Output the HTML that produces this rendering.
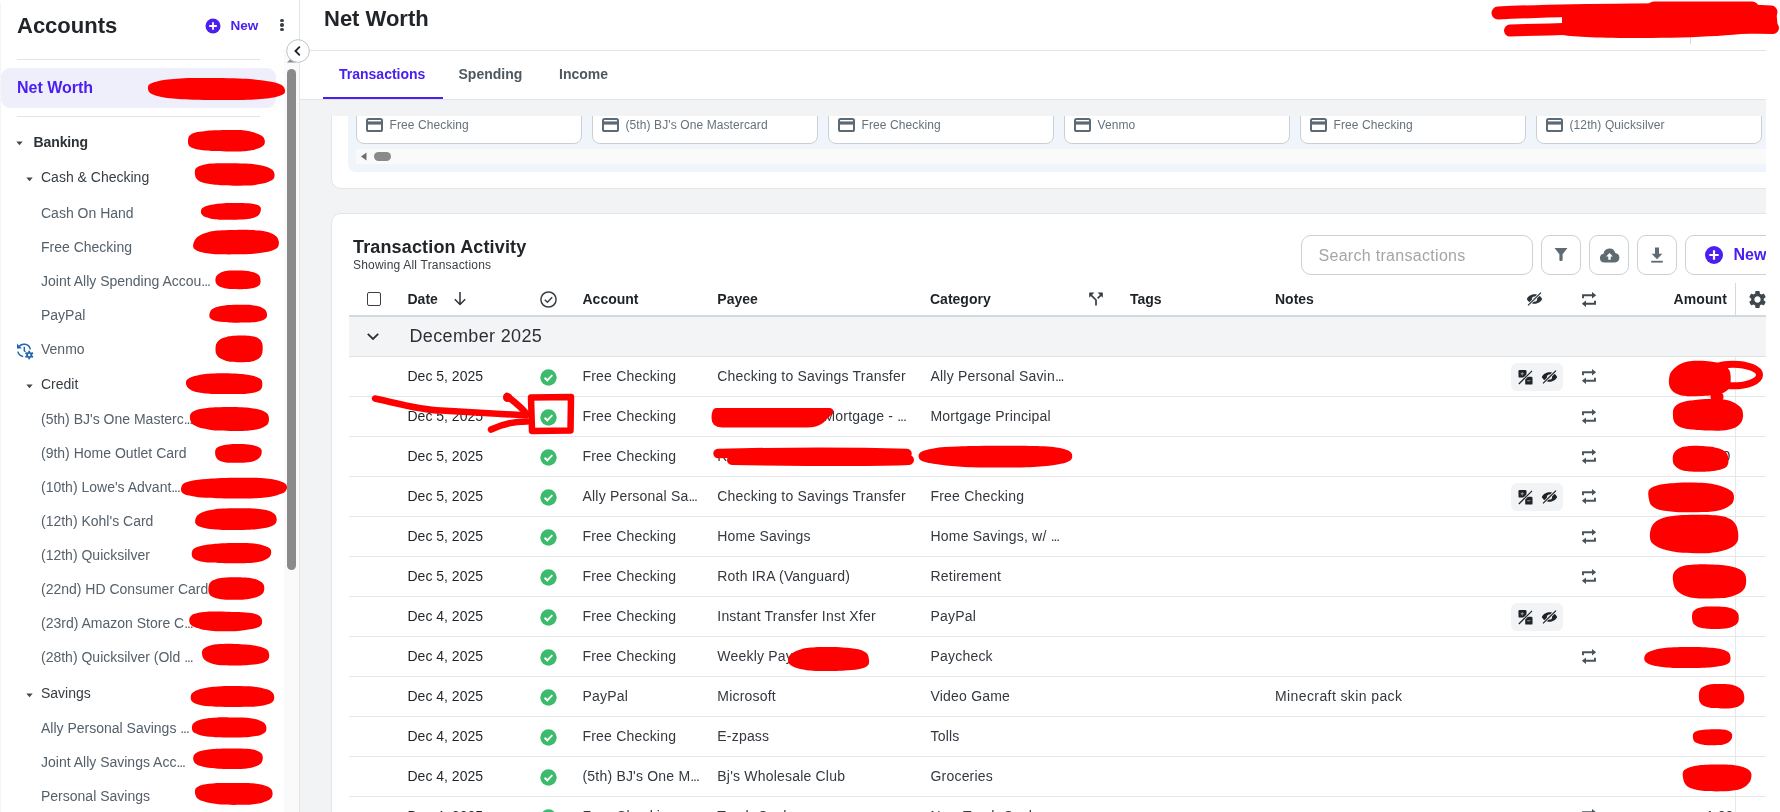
<!DOCTYPE html>
<html><head><meta charset="utf-8"><title>Net Worth</title>
<style>
html,body{margin:0;padding:0;width:1780px;height:812px;overflow:hidden;background:#fff}
body{position:relative;font-family:"Liberation Sans",sans-serif}
.t{position:absolute;white-space:nowrap;line-height:1}
.r{position:absolute}
.el{letter-spacing:-1.1px}
</style></head><body>
<div style="position:absolute;left:0;top:0;width:1780px;height:812px;background:#fff;will-change:transform;overflow:hidden">
<div class="r" style="left:0px;top:0px;width:299px;height:812px;background:#fff"></div>
<div class="r" style="left:0px;top:3px;width:1px;height:809px;background:#f4f5f6"></div>
<div class="t" style="left:17px;top:15px;font-size:22px;font-weight:700;color:#212529;">Accounts</div>
<svg class="r" style="left:205px;top:18px" width="16" height="16" viewBox="0 0 16 16"><circle cx="8" cy="8" r="7.5" fill="#4a1ff0"/><path d="M8 4.2v7.6M4.2 8h7.6" stroke="#fff" stroke-width="1.8"/></svg>
<div class="t" style="left:230.5px;top:19px;font-size:13.5px;font-weight:700;color:#4a1ff0;">New</div>
<div class="r" style="left:280.3px;top:18.7px;width:3.4px;height:3.4px;background:#3d4449;border-radius:50%"></div>
<div class="r" style="left:280.3px;top:23.2px;width:3.4px;height:3.4px;background:#3d4449;border-radius:50%"></div>
<div class="r" style="left:280.3px;top:27.7px;width:3.4px;height:3.4px;background:#3d4449;border-radius:50%"></div>
<div class="r" style="left:17px;top:59px;width:243px;height:1px;background:#e1e5e8"></div>
<div class="r" style="left:1px;top:68px;width:275px;height:40px;background:#efeffc;border-radius:9px"></div>
<div class="t" style="left:17px;top:80px;font-size:16px;font-weight:700;color:#4a1ff0;">Net Worth</div>
<div class="r" style="left:17px;top:116px;width:243px;height:1px;background:#e1e5e8"></div>
<svg class="r" style="left:16px;top:141px" width="7" height="5" viewBox="0 0 7 5"><path d="M0.3 0.6h6.4L3.5 4.3z" fill="#414a51"/></svg>
<div class="t" style="left:33.5px;top:135px;font-size:14px;font-weight:700;color:#2c3238;letter-spacing:-0.1px">Banking</div>
<svg class="r" style="left:26px;top:177px" width="7" height="5" viewBox="0 0 7 5"><path d="M0.3 0.6h6.4L3.5 4.3z" fill="#414a51"/></svg>
<div class="t" style="left:41px;top:170px;font-size:14px;font-weight:400;color:#363d43;">Cash &amp; Checking</div>
<div class="t" style="left:41px;top:206px;font-size:14px;font-weight:400;color:#55606a;">Cash On Hand</div>
<div class="t" style="left:41px;top:240px;font-size:14px;font-weight:400;color:#55606a;">Free Checking</div>
<div class="t" style="left:41px;top:274px;font-size:14px;font-weight:400;color:#55606a;">Joint Ally Spending Accou<span class="el">...</span></div>
<div class="t" style="left:41px;top:308px;font-size:14px;font-weight:400;color:#55606a;">PayPal</div>
<div class="t" style="left:41px;top:342px;font-size:14px;font-weight:400;color:#55606a;">Venmo</div>
<svg class="r" style="left:16px;top:342px" width="18" height="18" viewBox="0 0 18 18"><g fill="none" stroke="#2167b0" stroke-width="1.5"><path d="M2.6 5.2A6.4 6.4 0 0 1 14.3 7.4"/><path d="M1.9 9.6A6.4 6.4 0 0 0 7.2 14.4"/><path d="M8.3 4.8v3.9l1.1 1.1"/></g><path d="M1 1.6v4.9h4.9z" fill="#2167b0"/><g transform="translate(13.2 13)" fill="#2167b0"><circle r="3"/><rect x="-0.9" y="-4.3" width="1.8" height="2" transform="rotate(0)"/><rect x="-0.9" y="-4.3" width="1.8" height="2" transform="rotate(60)"/><rect x="-0.9" y="-4.3" width="1.8" height="2" transform="rotate(120)"/><rect x="-0.9" y="-4.3" width="1.8" height="2" transform="rotate(180)"/><rect x="-0.9" y="-4.3" width="1.8" height="2" transform="rotate(240)"/><rect x="-0.9" y="-4.3" width="1.8" height="2" transform="rotate(300)"/><circle r="1.2" fill="#fff"/></g></svg>
<svg class="r" style="left:26px;top:384px" width="7" height="5" viewBox="0 0 7 5"><path d="M0.3 0.6h6.4L3.5 4.3z" fill="#414a51"/></svg>
<div class="t" style="left:41px;top:377px;font-size:14px;font-weight:400;color:#363d43;">Credit</div>
<div class="t" style="left:41px;top:412px;font-size:14px;font-weight:400;color:#55606a;">(5th) BJ's One Masterc<span class="el">...</span></div>
<div class="t" style="left:41px;top:446px;font-size:14px;font-weight:400;color:#55606a;">(9th) Home Outlet Card</div>
<div class="t" style="left:41px;top:480px;font-size:14px;font-weight:400;color:#55606a;">(10th) Lowe's Advant<span class="el">...</span></div>
<div class="t" style="left:41px;top:514px;font-size:14px;font-weight:400;color:#55606a;">(12th) Kohl's Card</div>
<div class="t" style="left:41px;top:548px;font-size:14px;font-weight:400;color:#55606a;">(12th) Quicksilver</div>
<div class="t" style="left:41px;top:582px;font-size:14px;font-weight:400;color:#55606a;">(22nd) HD Consumer Card</div>
<div class="t" style="left:41px;top:616px;font-size:14px;font-weight:400;color:#55606a;">(23rd) Amazon Store C<span class="el">...</span></div>
<div class="t" style="left:41px;top:650px;font-size:14px;font-weight:400;color:#55606a;">(28th) Quicksilver (Old <span class="el">...</span></div>
<svg class="r" style="left:26px;top:693px" width="7" height="5" viewBox="0 0 7 5"><path d="M0.3 0.6h6.4L3.5 4.3z" fill="#414a51"/></svg>
<div class="t" style="left:41px;top:686px;font-size:14px;font-weight:400;color:#363d43;">Savings</div>
<div class="t" style="left:41px;top:721px;font-size:14px;font-weight:400;color:#55606a;">Ally Personal Savings <span class="el">...</span></div>
<div class="t" style="left:41px;top:755px;font-size:14px;font-weight:400;color:#55606a;">Joint Ally Savings Acc<span class="el">...</span></div>
<div class="t" style="left:41px;top:789px;font-size:14px;font-weight:400;color:#55606a;">Personal Savings</div>
<div class="r" style="left:284px;top:50px;width:15px;height:762px;background:#fafafa"></div>
<svg class="r" style="left:286px;top:57px" width="11" height="6" viewBox="0 0 11 6"><path d="M1 5.5h9L5.5 1z" fill="#8c8c8c"/></svg>
<div class="r" style="left:287px;top:69px;width:9px;height:501px;background:#8a8a8a;border-radius:4.5px"></div>
<div class="r" style="left:299px;top:0px;width:1px;height:812px;background:#e3e6e9"></div>
<div class="r" style="left:300px;top:0px;width:1466px;height:99px;background:#fff"></div>
<div class="r" style="left:300px;top:99px;width:1466px;height:713px;background:#f2f3f5"></div>
<div class="r" style="left:1766px;top:0px;width:14px;height:812px;background:#fff"></div>
<div class="t" style="left:324px;top:8px;font-size:22px;font-weight:700;color:#212529;">Net Worth</div>
<div class="r" style="left:300px;top:50px;width:1466px;height:1px;background:#e1e5e8"></div>
<div class="r" style="left:300px;top:99px;width:1466px;height:1px;background:#e1e5e8"></div>
<div class="t" style="left:339px;top:67px;font-size:14px;font-weight:700;color:#4a1ff0;">Transactions</div>
<div class="t" style="left:458.5px;top:67px;font-size:14px;font-weight:700;color:#4e5860;">Spending</div>
<div class="t" style="left:559px;top:67px;font-size:14px;font-weight:700;color:#4e5860;">Income</div>
<div class="r" style="left:323px;top:97px;width:120px;height:2px;background:#4a1ff0"></div>
<svg class="r" style="left:286px;top:39px" width="24" height="24" viewBox="0 0 24 24"><circle cx="12" cy="12" r="11.3" fill="#fff" stroke="#b9c5c9" stroke-width="1"/><path d="M13.8 7.6L9.4 12l4.4 4.4" fill="none" stroke="#1f2327" stroke-width="1.8"/></svg>
<div class="r" style="left:300px;top:116px;width:1466px;height:696px;overflow:hidden">
<div class="r" style="left:31px;top:-76px;width:1500px;height:148.5px;background:#fff;border:1px solid #e3e6e9;border-radius:10px;box-sizing:border-box"></div>
<div class="r" style="left:48px;top:-56px;width:1480px;height:112px;background:#f0f5fc;border-radius:8px"></div>
<div class="r" style="left:56px;top:-46px;width:225.5px;height:73.5px;background:#fff;border:1px solid #c8d0d5;border-radius:8px;box-sizing:border-box"></div>
<svg class="r" style="left:66px;top:2px" width="17" height="14" viewBox="0 0 17 14"><rect x="1" y="1" width="15" height="12" rx="1.6" fill="none" stroke="#5b6a74" stroke-width="2"/><rect x="1" y="3.4" width="15" height="3.2" fill="#5b6a74"/></svg>
<div class="t" style="left:89.5px;top:3px;font-size:12px;font-weight:400;color:#65727b;letter-spacing:0.1px">Free Checking</div>
<div class="r" style="left:292px;top:-46px;width:225.5px;height:73.5px;background:#fff;border:1px solid #c8d0d5;border-radius:8px;box-sizing:border-box"></div>
<svg class="r" style="left:302px;top:2px" width="17" height="14" viewBox="0 0 17 14"><rect x="1" y="1" width="15" height="12" rx="1.6" fill="none" stroke="#5b6a74" stroke-width="2"/><rect x="1" y="3.4" width="15" height="3.2" fill="#5b6a74"/></svg>
<div class="t" style="left:325.5px;top:3px;font-size:12px;font-weight:400;color:#65727b;letter-spacing:0.1px">(5th) BJ's One Mastercard</div>
<div class="r" style="left:528px;top:-46px;width:225.5px;height:73.5px;background:#fff;border:1px solid #c8d0d5;border-radius:8px;box-sizing:border-box"></div>
<svg class="r" style="left:538px;top:2px" width="17" height="14" viewBox="0 0 17 14"><rect x="1" y="1" width="15" height="12" rx="1.6" fill="none" stroke="#5b6a74" stroke-width="2"/><rect x="1" y="3.4" width="15" height="3.2" fill="#5b6a74"/></svg>
<div class="t" style="left:561.5px;top:3px;font-size:12px;font-weight:400;color:#65727b;letter-spacing:0.1px">Free Checking</div>
<div class="r" style="left:764px;top:-46px;width:225.5px;height:73.5px;background:#fff;border:1px solid #c8d0d5;border-radius:8px;box-sizing:border-box"></div>
<svg class="r" style="left:774px;top:2px" width="17" height="14" viewBox="0 0 17 14"><rect x="1" y="1" width="15" height="12" rx="1.6" fill="none" stroke="#5b6a74" stroke-width="2"/><rect x="1" y="3.4" width="15" height="3.2" fill="#5b6a74"/></svg>
<div class="t" style="left:797.5px;top:3px;font-size:12px;font-weight:400;color:#65727b;letter-spacing:0.1px">Venmo</div>
<div class="r" style="left:1000px;top:-46px;width:225.5px;height:73.5px;background:#fff;border:1px solid #c8d0d5;border-radius:8px;box-sizing:border-box"></div>
<svg class="r" style="left:1010px;top:2px" width="17" height="14" viewBox="0 0 17 14"><rect x="1" y="1" width="15" height="12" rx="1.6" fill="none" stroke="#5b6a74" stroke-width="2"/><rect x="1" y="3.4" width="15" height="3.2" fill="#5b6a74"/></svg>
<div class="t" style="left:1033.5px;top:3px;font-size:12px;font-weight:400;color:#65727b;letter-spacing:0.1px">Free Checking</div>
<div class="r" style="left:1236px;top:-46px;width:225.5px;height:73.5px;background:#fff;border:1px solid #c8d0d5;border-radius:8px;box-sizing:border-box"></div>
<svg class="r" style="left:1246px;top:2px" width="17" height="14" viewBox="0 0 17 14"><rect x="1" y="1" width="15" height="12" rx="1.6" fill="none" stroke="#5b6a74" stroke-width="2"/><rect x="1" y="3.4" width="15" height="3.2" fill="#5b6a74"/></svg>
<div class="t" style="left:1269.5px;top:3px;font-size:12px;font-weight:400;color:#65727b;letter-spacing:0.1px">(12th) Quicksilver</div>
<div class="r" style="left:56px;top:33px;width:1420px;height:15px;background:#fafafa"></div>
<svg class="r" style="left:60px;top:36px" width="7" height="9" viewBox="0 0 7 9"><path d="M6.5 0.5v8L1 4.5z" fill="#6e6e6e"/></svg>
<div class="r" style="left:74px;top:36px;width:17px;height:9px;background:#8a8a8a;border-radius:4.5px"></div>
<div class="r" style="left:31px;top:97px;width:1500px;height:700px;background:#fff;border:1px solid #e3e6e9;border-radius:10px;box-sizing:border-box"></div>
</div>
<div class="t" style="left:353px;top:238px;font-size:18px;font-weight:700;color:#212529;letter-spacing:0.15px">Transaction Activity</div>
<div class="t" style="left:353px;top:259px;font-size:12px;font-weight:400;color:#3a3f44;letter-spacing:0.2px">Showing All Transactions</div>
<div class="r" style="left:1301px;top:235px;width:231.5px;height:40px;background:#fff;border:1px solid #c9d2d7;border-radius:10px;box-sizing:border-box"></div>
<div class="t" style="left:1318.5px;top:248px;font-size:16px;font-weight:400;color:#a5a5a5;letter-spacing:0.3px">Search transactions</div>
<div class="r" style="left:1541px;top:235px;width:40px;height:40px;background:#fff;border:1px solid #c9d2d7;border-radius:9px;box-sizing:border-box"></div>
<div class="r" style="left:1589px;top:235px;width:40px;height:40px;background:#fff;border:1px solid #c9d2d7;border-radius:9px;box-sizing:border-box"></div>
<div class="r" style="left:1637px;top:235px;width:40px;height:40px;background:#fff;border:1px solid #c9d2d7;border-radius:9px;box-sizing:border-box"></div>
<div class="r" style="left:1685px;top:235px;width:120px;height:40px;background:#fff;border:1px solid #c9d2d7;border-radius:9px;box-sizing:border-box"></div>
<svg class="r" style="left:1554px;top:247px" width="14" height="15" viewBox="0 0 14 15"><path d="M0.5 1h13L8.6 7.2v5.8a1.1 1.1 0 0 1-1.1 1.1h-1a1.1 1.1 0 0 1-1.1-1.1V7.2z" fill="#5e6b73"/></svg>
<svg class="r" style="left:1598.5px;top:247.5px" width="21" height="15" viewBox="0 0 22 16"><path d="M5.5 15.5a4.8 4.8 0 0 1-0.9-9.5A6.5 6.5 0 0 1 17.2 5.2a5.2 5.2 0 0 1-0.4 10.3z" fill="#5e6b73"/><path d="M11 5.2l-3.6 3.8h2.3v3.6h2.6V9h2.3z" fill="#fff"/></svg>
<svg class="r" style="left:1650px;top:247px" width="14" height="16" viewBox="0 0 14 16"><path d="M5 0.5h4v6.2h3.4L7 12.2 1.6 6.7H5z" fill="#5e6b73"/><rect x="1.2" y="13.8" width="11.6" height="1.8" fill="#5e6b73"/></svg>
<svg class="r" style="left:1704px;top:245px" width="20" height="20" viewBox="0 0 20 20"><circle cx="10" cy="10" r="9" fill="#4a1ff0"/><path d="M10 5.3v9.4M5.3 10h9.4" stroke="#fff" stroke-width="2.2"/></svg>
<div class="t" style="left:1733.5px;top:247px;font-size:16px;font-weight:700;color:#4a1ff0;">New</div>
<div class="r" style="left:1766px;top:225px;width:14px;height:60px;background:#fff"></div>
<div class="r" style="left:366.5px;top:291.5px;width:14.5px;height:14.5px;border:1.6px solid #3b4046;border-radius:2px;box-sizing:border-box"></div>
<div class="t" style="left:407.5px;top:292px;font-size:14px;font-weight:700;color:#1e2327;">Date</div>
<svg class="r" style="left:453px;top:291px" width="14" height="15" viewBox="0 0 14 15"><path d="M7 1v12.5M1.8 8.3L7 13.5l5.2-5.2" fill="none" stroke="#2b3136" stroke-width="1.5"/></svg>
<svg class="r" style="left:539.5px;top:290.5px" width="17" height="17" viewBox="0.5 0.5 17 17"><circle cx="9" cy="9" r="7.6" fill="none" stroke="#3b4046" stroke-width="1.5"/><path d="M5.3 9.2l2.6 2.6 4.8-5" fill="none" stroke="#3b4046" stroke-width="1.5"/></svg>
<div class="t" style="left:582.5px;top:292px;font-size:14px;font-weight:700;color:#1e2327;">Account</div>
<div class="t" style="left:717.3px;top:292px;font-size:14px;font-weight:700;color:#1e2327;">Payee</div>
<div class="t" style="left:930px;top:292px;font-size:14px;font-weight:700;color:#1e2327;">Category</div>
<svg class="r" style="left:1088px;top:291px" width="16" height="16" viewBox="0 0 16 16"><g fill="none" stroke="#353c42" stroke-width="1.7"><path d="M8 14.5V9L2.8 3.8"/><path d="M9.6 7.4l3.6-3.6"/></g><path d="M1.2 1.6h5.2L1.2 6.8z M14.8 1.6H9.6l5.2 5.2z" fill="#353c42"/></svg>
<div class="t" style="left:1130px;top:292px;font-size:14px;font-weight:700;color:#1e2327;">Tags</div>
<div class="t" style="left:1275px;top:292px;font-size:14px;font-weight:700;color:#1e2327;">Notes</div>
<svg class="r" style="left:1525.5px;top:291.5px" width="17" height="14" viewBox="0 0 17 14"><path d="M8.5 2.2C4.6 2.2 1.8 4.8 0.8 7c1 2.2 3.8 4.8 7.7 4.8s6.7-2.6 7.7-4.8c-1-2.2-3.8-4.8-7.7-4.8z" fill="#2d3439"/><circle cx="8.5" cy="7" r="2.6" fill="#fff"/><circle cx="8.5" cy="7" r="1.3" fill="#2d3439"/><path d="M15 0.6L2 13.4" stroke="#fff" stroke-width="2.6"/><path d="M15 0.6L2 13.4" stroke="#2d3439" stroke-width="1.3"/></svg>
<svg class="r" style="left:1581px;top:291px" width="16" height="17" viewBox="0 0 16 17"><g fill="none" stroke="#414a51" stroke-width="1.9"><path d="M2 7.2V4.3h10"/><path d="M14 9.8v2.9H4"/></g><path d="M11 1l4.2 3.3L11 7.6z M5 9.4L0.8 12.7 5 16z" fill="#414a51"/></svg>
<div class="t" style="left:1673.5px;top:292px;font-size:14px;font-weight:700;color:#1e2327;letter-spacing:0.1px">Amount</div>
<div class="r" style="left:1735px;top:283px;width:1px;height:33px;background:#d3d9dd"></div>
<svg class="r" style="left:1746.5px;top:288.5px" width="21" height="21" viewBox="0 0 24 24"><path fill="#3f474d" d="M19.14 12.94c.04-.3.06-.61.06-.94 0-.32-.02-.64-.07-.94l2.03-1.58a.49.49 0 0 0 .12-.61l-1.92-3.32a.488.488 0 0 0-.59-.22l-2.39.96c-.5-.38-1.03-.7-1.62-.94l-.36-2.54a.484.484 0 0 0-.48-.41h-3.84c-.24 0-.43.17-.47.41l-.36 2.54c-.59.24-1.13.57-1.62.94l-2.39-.96c-.22-.08-.47 0-.59.22L2.74 8.87c-.12.21-.08.47.12.61l2.03 1.58c-.05.3-.09.63-.09.94s.02.64.07.94l-2.03 1.58a.49.49 0 0 0-.12.61l1.92 3.32c.12.22.37.29.59.22l2.39-.96c.5.38 1.03.7 1.62.94l.36 2.54c.05.24.24.41.48.41h3.84c.24 0 .44-.17.47-.41l.36-2.54c.59-.24 1.13-.56 1.62-.94l2.39.96c.22.08.47 0 .59-.22l1.92-3.32c.12-.22.07-.47-.12-.61l-2.01-1.58zM12 15.6c-1.98 0-3.6-1.62-3.6-3.6s1.62-3.6 3.6-3.6 3.6 1.62 3.6 3.6-1.62 3.6-3.6 3.6z"/></svg>
<div class="r" style="left:349px;top:315px;width:1417px;height:1.5px;background:#d3dade"></div>
<div class="r" style="left:349px;top:316.5px;width:1417px;height:40px;background:#f3f4f6"></div>
<div class="r" style="left:349px;top:356px;width:1417px;height:1px;background:#dfe3e6"></div>
<svg class="r" style="left:366px;top:331px" width="14" height="12" viewBox="0 0 14 12"><path d="M1.8 2.8L7 8l5.2-5.2" fill="none" stroke="#2b3136" stroke-width="1.8"/></svg>
<div class="t" style="left:409.5px;top:327px;font-size:18px;font-weight:400;color:#2b3036;letter-spacing:0.35px">December 2025</div>
<div class="t" style="left:407.5px;top:369px;font-size:14px;font-weight:400;color:#1f2429;">Dec 5, 2025</div>
<svg class="r" style="left:540px;top:368.5px" width="17" height="17" viewBox="0 0 17 17"><circle cx="8.5" cy="8.5" r="8.2" fill="#3dbb6c"/><path d="M4.6 8.7l2.7 2.6 5-5.1" fill="none" stroke="#fff" stroke-width="1.9"/></svg>
<div class="t" style="left:582.5px;top:369px;font-size:14px;font-weight:400;color:#33393f;letter-spacing:0.2px">Free Checking</div>
<div class="t" style="left:717.3px;top:369px;font-size:14px;font-weight:400;color:#33393f;letter-spacing:0.2px">Checking to Savings Transfer</div>
<div class="t" style="left:930.5px;top:369px;font-size:14px;font-weight:400;color:#33393f;letter-spacing:0.2px">Ally Personal Savin<span class="el">...</span></div>
<div class="r" style="left:1511px;top:363px;width:52px;height:28px;background:#f2f3f5;border-radius:6px"></div>
<svg class="r" style="left:1517.5px;top:369.5px" width="15" height="15" viewBox="0 0 15 15"><rect x="0.5" y="0" width="8" height="7.6" rx="1.2" fill="#1f2327"/><rect x="7.2" y="6.8" width="7.3" height="7.8" rx="1.2" fill="#1f2327"/><path d="M2.6 3.8h3.2M4.2 2.2v3.2M9.2 10.8h3.2" stroke="#9aa0a5" stroke-width="1.1"/><path d="M14 0.8L0.8 14" stroke="#f2f3f5" stroke-width="2.6"/><path d="M14 0.8L0.8 14" stroke="#1f2327" stroke-width="1.2"/></svg>
<svg class="r" style="left:1540.5px;top:370px" width="17" height="14" viewBox="0 0 17 14"><path d="M8.5 2.2C4.6 2.2 1.8 4.8 0.8 7c1 2.2 3.8 4.8 7.7 4.8s6.7-2.6 7.7-4.8c-1-2.2-3.8-4.8-7.7-4.8z" fill="#1f2327"/><circle cx="8.5" cy="7" r="2.6" fill="#f2f3f5"/><circle cx="8.5" cy="7" r="1.3" fill="#1f2327"/><path d="M15 0.6L2 13.4" stroke="#f2f3f5" stroke-width="2.6"/><path d="M15 0.6L2 13.4" stroke="#1f2327" stroke-width="1.3"/></svg>
<svg class="r" style="left:1581px;top:368px" width="16" height="17" viewBox="0 0 16 17"><g fill="none" stroke="#4a545c" stroke-width="1.9"><path d="M2 7.2V4.3h10"/><path d="M14 9.8v2.9H4"/></g><path d="M11 1l4.2 3.3L11 7.6z M5 9.4L0.8 12.7 5 16z" fill="#4a545c"/></svg>
<div class="r" style="left:349px;top:396px;width:1417px;height:1px;background:#e3e7ea"></div>
<div class="r" style="left:1735px;top:357px;width:1px;height:39px;background:#e6e9ec"></div>
<div class="t" style="left:407.5px;top:409px;font-size:14px;font-weight:400;color:#1f2429;">Dec 5, 2025</div>
<svg class="r" style="left:540px;top:408.5px" width="17" height="17" viewBox="0 0 17 17"><circle cx="8.5" cy="8.5" r="8.2" fill="#3dbb6c"/><path d="M4.6 8.7l2.7 2.6 5-5.1" fill="none" stroke="#fff" stroke-width="1.9"/></svg>
<div class="t" style="left:582.5px;top:409px;font-size:14px;font-weight:400;color:#33393f;letter-spacing:0.2px">Free Checking</div>
<div class="t" style="left:823.5px;top:409px;font-size:14px;font-weight:400;color:#33393f;letter-spacing:0.2px">Mortgage - <span class="el">...</span></div>
<div class="t" style="left:930.5px;top:409px;font-size:14px;font-weight:400;color:#33393f;letter-spacing:0.2px">Mortgage Principal</div>
<svg class="r" style="left:1581px;top:408px" width="16" height="17" viewBox="0 0 16 17"><g fill="none" stroke="#4a545c" stroke-width="1.9"><path d="M2 7.2V4.3h10"/><path d="M14 9.8v2.9H4"/></g><path d="M11 1l4.2 3.3L11 7.6z M5 9.4L0.8 12.7 5 16z" fill="#4a545c"/></svg>
<div class="r" style="left:349px;top:436px;width:1417px;height:1px;background:#e3e7ea"></div>
<div class="r" style="left:1735px;top:397px;width:1px;height:39px;background:#e6e9ec"></div>
<div class="t" style="left:407.5px;top:449px;font-size:14px;font-weight:400;color:#1f2429;">Dec 5, 2025</div>
<svg class="r" style="left:540px;top:448.5px" width="17" height="17" viewBox="0 0 17 17"><circle cx="8.5" cy="8.5" r="8.2" fill="#3dbb6c"/><path d="M4.6 8.7l2.7 2.6 5-5.1" fill="none" stroke="#fff" stroke-width="1.9"/></svg>
<div class="t" style="left:582.5px;top:449px;font-size:14px;font-weight:400;color:#33393f;letter-spacing:0.2px">Free Checking</div>
<div class="t" style="left:717.3px;top:449px;font-size:14px;font-weight:400;color:#33393f;letter-spacing:0.2px">R</div>
<div class="t" style="left:930.5px;top:449px;font-size:14px;font-weight:400;color:#33393f;letter-spacing:0.2px"></div>
<svg class="r" style="left:1581px;top:448px" width="16" height="17" viewBox="0 0 16 17"><g fill="none" stroke="#4a545c" stroke-width="1.9"><path d="M2 7.2V4.3h10"/><path d="M14 9.8v2.9H4"/></g><path d="M11 1l4.2 3.3L11 7.6z M5 9.4L0.8 12.7 5 16z" fill="#4a545c"/></svg>
<div class="r" style="left:349px;top:476px;width:1417px;height:1px;background:#e3e7ea"></div>
<div class="r" style="left:1735px;top:437px;width:1px;height:39px;background:#e6e9ec"></div>
<div class="t" style="left:407.5px;top:489px;font-size:14px;font-weight:400;color:#1f2429;">Dec 5, 2025</div>
<svg class="r" style="left:540px;top:488.5px" width="17" height="17" viewBox="0 0 17 17"><circle cx="8.5" cy="8.5" r="8.2" fill="#3dbb6c"/><path d="M4.6 8.7l2.7 2.6 5-5.1" fill="none" stroke="#fff" stroke-width="1.9"/></svg>
<div class="t" style="left:582.5px;top:489px;font-size:14px;font-weight:400;color:#33393f;letter-spacing:0.2px">Ally Personal Sa<span class="el">...</span></div>
<div class="t" style="left:717.3px;top:489px;font-size:14px;font-weight:400;color:#33393f;letter-spacing:0.2px">Checking to Savings Transfer</div>
<div class="t" style="left:930.5px;top:489px;font-size:14px;font-weight:400;color:#33393f;letter-spacing:0.2px">Free Checking</div>
<div class="r" style="left:1511px;top:483px;width:52px;height:28px;background:#f2f3f5;border-radius:6px"></div>
<svg class="r" style="left:1517.5px;top:489.5px" width="15" height="15" viewBox="0 0 15 15"><rect x="0.5" y="0" width="8" height="7.6" rx="1.2" fill="#1f2327"/><rect x="7.2" y="6.8" width="7.3" height="7.8" rx="1.2" fill="#1f2327"/><path d="M2.6 3.8h3.2M4.2 2.2v3.2M9.2 10.8h3.2" stroke="#9aa0a5" stroke-width="1.1"/><path d="M14 0.8L0.8 14" stroke="#f2f3f5" stroke-width="2.6"/><path d="M14 0.8L0.8 14" stroke="#1f2327" stroke-width="1.2"/></svg>
<svg class="r" style="left:1540.5px;top:490px" width="17" height="14" viewBox="0 0 17 14"><path d="M8.5 2.2C4.6 2.2 1.8 4.8 0.8 7c1 2.2 3.8 4.8 7.7 4.8s6.7-2.6 7.7-4.8c-1-2.2-3.8-4.8-7.7-4.8z" fill="#1f2327"/><circle cx="8.5" cy="7" r="2.6" fill="#f2f3f5"/><circle cx="8.5" cy="7" r="1.3" fill="#1f2327"/><path d="M15 0.6L2 13.4" stroke="#f2f3f5" stroke-width="2.6"/><path d="M15 0.6L2 13.4" stroke="#1f2327" stroke-width="1.3"/></svg>
<svg class="r" style="left:1581px;top:488px" width="16" height="17" viewBox="0 0 16 17"><g fill="none" stroke="#4a545c" stroke-width="1.9"><path d="M2 7.2V4.3h10"/><path d="M14 9.8v2.9H4"/></g><path d="M11 1l4.2 3.3L11 7.6z M5 9.4L0.8 12.7 5 16z" fill="#4a545c"/></svg>
<div class="r" style="left:349px;top:516px;width:1417px;height:1px;background:#e3e7ea"></div>
<div class="r" style="left:1735px;top:477px;width:1px;height:39px;background:#e6e9ec"></div>
<div class="t" style="left:407.5px;top:529px;font-size:14px;font-weight:400;color:#1f2429;">Dec 5, 2025</div>
<svg class="r" style="left:540px;top:528.5px" width="17" height="17" viewBox="0 0 17 17"><circle cx="8.5" cy="8.5" r="8.2" fill="#3dbb6c"/><path d="M4.6 8.7l2.7 2.6 5-5.1" fill="none" stroke="#fff" stroke-width="1.9"/></svg>
<div class="t" style="left:582.5px;top:529px;font-size:14px;font-weight:400;color:#33393f;letter-spacing:0.2px">Free Checking</div>
<div class="t" style="left:717.3px;top:529px;font-size:14px;font-weight:400;color:#33393f;letter-spacing:0.2px">Home Savings</div>
<div class="t" style="left:930.5px;top:529px;font-size:14px;font-weight:400;color:#33393f;letter-spacing:0.2px">Home Savings, w/ <span class="el">...</span></div>
<svg class="r" style="left:1581px;top:528px" width="16" height="17" viewBox="0 0 16 17"><g fill="none" stroke="#4a545c" stroke-width="1.9"><path d="M2 7.2V4.3h10"/><path d="M14 9.8v2.9H4"/></g><path d="M11 1l4.2 3.3L11 7.6z M5 9.4L0.8 12.7 5 16z" fill="#4a545c"/></svg>
<div class="r" style="left:349px;top:556px;width:1417px;height:1px;background:#e3e7ea"></div>
<div class="r" style="left:1735px;top:517px;width:1px;height:39px;background:#e6e9ec"></div>
<div class="t" style="left:407.5px;top:569px;font-size:14px;font-weight:400;color:#1f2429;">Dec 5, 2025</div>
<svg class="r" style="left:540px;top:568.5px" width="17" height="17" viewBox="0 0 17 17"><circle cx="8.5" cy="8.5" r="8.2" fill="#3dbb6c"/><path d="M4.6 8.7l2.7 2.6 5-5.1" fill="none" stroke="#fff" stroke-width="1.9"/></svg>
<div class="t" style="left:582.5px;top:569px;font-size:14px;font-weight:400;color:#33393f;letter-spacing:0.2px">Free Checking</div>
<div class="t" style="left:717.3px;top:569px;font-size:14px;font-weight:400;color:#33393f;letter-spacing:0.2px">Roth IRA (Vanguard)</div>
<div class="t" style="left:930.5px;top:569px;font-size:14px;font-weight:400;color:#33393f;letter-spacing:0.2px">Retirement</div>
<svg class="r" style="left:1581px;top:568px" width="16" height="17" viewBox="0 0 16 17"><g fill="none" stroke="#4a545c" stroke-width="1.9"><path d="M2 7.2V4.3h10"/><path d="M14 9.8v2.9H4"/></g><path d="M11 1l4.2 3.3L11 7.6z M5 9.4L0.8 12.7 5 16z" fill="#4a545c"/></svg>
<div class="r" style="left:349px;top:596px;width:1417px;height:1px;background:#e3e7ea"></div>
<div class="r" style="left:1735px;top:557px;width:1px;height:39px;background:#e6e9ec"></div>
<div class="t" style="left:407.5px;top:609px;font-size:14px;font-weight:400;color:#1f2429;">Dec 4, 2025</div>
<svg class="r" style="left:540px;top:608.5px" width="17" height="17" viewBox="0 0 17 17"><circle cx="8.5" cy="8.5" r="8.2" fill="#3dbb6c"/><path d="M4.6 8.7l2.7 2.6 5-5.1" fill="none" stroke="#fff" stroke-width="1.9"/></svg>
<div class="t" style="left:582.5px;top:609px;font-size:14px;font-weight:400;color:#33393f;letter-spacing:0.2px">Free Checking</div>
<div class="t" style="left:717.3px;top:609px;font-size:14px;font-weight:400;color:#33393f;letter-spacing:0.2px">Instant Transfer Inst Xfer</div>
<div class="t" style="left:930.5px;top:609px;font-size:14px;font-weight:400;color:#33393f;letter-spacing:0.2px">PayPal</div>
<div class="r" style="left:1511px;top:603px;width:52px;height:28px;background:#f2f3f5;border-radius:6px"></div>
<svg class="r" style="left:1517.5px;top:609.5px" width="15" height="15" viewBox="0 0 15 15"><rect x="0.5" y="0" width="8" height="7.6" rx="1.2" fill="#1f2327"/><rect x="7.2" y="6.8" width="7.3" height="7.8" rx="1.2" fill="#1f2327"/><path d="M2.6 3.8h3.2M4.2 2.2v3.2M9.2 10.8h3.2" stroke="#9aa0a5" stroke-width="1.1"/><path d="M14 0.8L0.8 14" stroke="#f2f3f5" stroke-width="2.6"/><path d="M14 0.8L0.8 14" stroke="#1f2327" stroke-width="1.2"/></svg>
<svg class="r" style="left:1540.5px;top:610px" width="17" height="14" viewBox="0 0 17 14"><path d="M8.5 2.2C4.6 2.2 1.8 4.8 0.8 7c1 2.2 3.8 4.8 7.7 4.8s6.7-2.6 7.7-4.8c-1-2.2-3.8-4.8-7.7-4.8z" fill="#1f2327"/><circle cx="8.5" cy="7" r="2.6" fill="#f2f3f5"/><circle cx="8.5" cy="7" r="1.3" fill="#1f2327"/><path d="M15 0.6L2 13.4" stroke="#f2f3f5" stroke-width="2.6"/><path d="M15 0.6L2 13.4" stroke="#1f2327" stroke-width="1.3"/></svg>
<div class="r" style="left:349px;top:636px;width:1417px;height:1px;background:#e3e7ea"></div>
<div class="r" style="left:1735px;top:597px;width:1px;height:39px;background:#e6e9ec"></div>
<div class="t" style="left:407.5px;top:649px;font-size:14px;font-weight:400;color:#1f2429;">Dec 4, 2025</div>
<svg class="r" style="left:540px;top:648.5px" width="17" height="17" viewBox="0 0 17 17"><circle cx="8.5" cy="8.5" r="8.2" fill="#3dbb6c"/><path d="M4.6 8.7l2.7 2.6 5-5.1" fill="none" stroke="#fff" stroke-width="1.9"/></svg>
<div class="t" style="left:582.5px;top:649px;font-size:14px;font-weight:400;color:#33393f;letter-spacing:0.2px">Free Checking</div>
<div class="t" style="left:717.3px;top:649px;font-size:14px;font-weight:400;color:#33393f;letter-spacing:0.2px">Weekly Pay</div>
<div class="t" style="left:930.5px;top:649px;font-size:14px;font-weight:400;color:#33393f;letter-spacing:0.2px">Paycheck</div>
<svg class="r" style="left:1581px;top:648px" width="16" height="17" viewBox="0 0 16 17"><g fill="none" stroke="#4a545c" stroke-width="1.9"><path d="M2 7.2V4.3h10"/><path d="M14 9.8v2.9H4"/></g><path d="M11 1l4.2 3.3L11 7.6z M5 9.4L0.8 12.7 5 16z" fill="#4a545c"/></svg>
<div class="r" style="left:349px;top:676px;width:1417px;height:1px;background:#e3e7ea"></div>
<div class="r" style="left:1735px;top:637px;width:1px;height:39px;background:#e6e9ec"></div>
<div class="t" style="left:407.5px;top:689px;font-size:14px;font-weight:400;color:#1f2429;">Dec 4, 2025</div>
<svg class="r" style="left:540px;top:688.5px" width="17" height="17" viewBox="0 0 17 17"><circle cx="8.5" cy="8.5" r="8.2" fill="#3dbb6c"/><path d="M4.6 8.7l2.7 2.6 5-5.1" fill="none" stroke="#fff" stroke-width="1.9"/></svg>
<div class="t" style="left:582.5px;top:689px;font-size:14px;font-weight:400;color:#33393f;letter-spacing:0.2px">PayPal</div>
<div class="t" style="left:717.3px;top:689px;font-size:14px;font-weight:400;color:#33393f;letter-spacing:0.2px">Microsoft</div>
<div class="t" style="left:930.5px;top:689px;font-size:14px;font-weight:400;color:#33393f;letter-spacing:0.2px">Video Game</div>
<div class="t" style="left:1275px;top:689px;font-size:14px;font-weight:400;color:#33393f;letter-spacing:0.4px">Minecraft skin pack</div>
<div class="r" style="left:349px;top:716px;width:1417px;height:1px;background:#e3e7ea"></div>
<div class="r" style="left:1735px;top:677px;width:1px;height:39px;background:#e6e9ec"></div>
<div class="t" style="left:407.5px;top:729px;font-size:14px;font-weight:400;color:#1f2429;">Dec 4, 2025</div>
<svg class="r" style="left:540px;top:728.5px" width="17" height="17" viewBox="0 0 17 17"><circle cx="8.5" cy="8.5" r="8.2" fill="#3dbb6c"/><path d="M4.6 8.7l2.7 2.6 5-5.1" fill="none" stroke="#fff" stroke-width="1.9"/></svg>
<div class="t" style="left:582.5px;top:729px;font-size:14px;font-weight:400;color:#33393f;letter-spacing:0.2px">Free Checking</div>
<div class="t" style="left:717.3px;top:729px;font-size:14px;font-weight:400;color:#33393f;letter-spacing:0.2px">E-zpass</div>
<div class="t" style="left:930.5px;top:729px;font-size:14px;font-weight:400;color:#33393f;letter-spacing:0.2px">Tolls</div>
<div class="r" style="left:349px;top:756px;width:1417px;height:1px;background:#e3e7ea"></div>
<div class="r" style="left:1735px;top:717px;width:1px;height:39px;background:#e6e9ec"></div>
<div class="t" style="left:407.5px;top:769px;font-size:14px;font-weight:400;color:#1f2429;">Dec 4, 2025</div>
<svg class="r" style="left:540px;top:768.5px" width="17" height="17" viewBox="0 0 17 17"><circle cx="8.5" cy="8.5" r="8.2" fill="#3dbb6c"/><path d="M4.6 8.7l2.7 2.6 5-5.1" fill="none" stroke="#fff" stroke-width="1.9"/></svg>
<div class="t" style="left:582.5px;top:769px;font-size:14px;font-weight:400;color:#33393f;letter-spacing:0.2px">(5th) BJ's One M<span class="el">...</span></div>
<div class="t" style="left:717.3px;top:769px;font-size:14px;font-weight:400;color:#33393f;letter-spacing:0.2px">Bj's Wholesale Club</div>
<div class="t" style="left:930.5px;top:769px;font-size:14px;font-weight:400;color:#33393f;letter-spacing:0.2px">Groceries</div>
<div class="r" style="left:349px;top:796px;width:1417px;height:1px;background:#e3e7ea"></div>
<div class="r" style="left:1735px;top:757px;width:1px;height:39px;background:#e6e9ec"></div>
<div class="t" style="left:407.5px;top:809px;font-size:14px;font-weight:400;color:#1f2429;">Dec 4, 2025</div>
<svg class="r" style="left:540px;top:808.5px" width="17" height="17" viewBox="0 0 17 17"><circle cx="8.5" cy="8.5" r="8.2" fill="#3dbb6c"/><path d="M4.6 8.7l2.7 2.6 5-5.1" fill="none" stroke="#fff" stroke-width="1.9"/></svg>
<div class="t" style="left:582.5px;top:809px;font-size:14px;font-weight:400;color:#33393f;letter-spacing:0.2px">Free Checking</div>
<div class="t" style="left:717.3px;top:809px;font-size:14px;font-weight:400;color:#33393f;letter-spacing:0.2px">Trash Cash</div>
<div class="t" style="left:930.5px;top:809px;font-size:14px;font-weight:400;color:#33393f;letter-spacing:0.2px">New Trash Cash</div>
<svg class="r" style="left:1581px;top:808px" width="16" height="17" viewBox="0 0 16 17"><g fill="none" stroke="#4a545c" stroke-width="1.9"><path d="M2 7.2V4.3h10"/><path d="M14 9.8v2.9H4"/></g><path d="M11 1l4.2 3.3L11 7.6z M5 9.4L0.8 12.7 5 16z" fill="#4a545c"/></svg>
<div class="r" style="left:349px;top:836px;width:1417px;height:1px;background:#e3e7ea"></div>
<div class="r" style="left:1735px;top:797px;width:1px;height:39px;background:#e6e9ec"></div>
<div class="t" style="left:1722.5px;top:449px;font-size:14px;font-weight:400;color:#2b3036;">0</div>
<div class="t" style="left:1706px;top:809px;font-size:14px;font-weight:400;color:#2b3036;">1.00</div>
<div class="r" style="left:1690px;top:37px;width:1px;height:7px;background:#d5dadd"></div>
<svg class="r" style="left:0;top:0" width="1780" height="812" viewBox="0 0 1780 812">
<path d="M284.8 89.2 C285.2 90.3 285.2 91.7 284.7 92.7 C284.2 93.7 283.3 94.4 281.8 95.1 C280.3 95.8 278.3 96.5 275.7 97.0 C273.2 97.6 270.1 98.1 266.5 98.5 C262.9 98.9 258.9 99.2 254.3 99.4 C249.8 99.7 245.5 99.8 239.1 99.9 C232.8 100.0 223.7 100.1 216.0 100.1 C208.3 100.0 199.4 99.9 193.2 99.8 C187.0 99.6 183.0 99.4 178.8 99.1 C174.5 98.9 170.9 98.5 167.7 98.1 C164.4 97.7 161.7 97.2 159.4 96.6 C157.0 96.1 155.1 95.5 153.5 94.8 C151.9 94.2 150.6 93.6 149.7 92.6 C148.8 91.7 148.2 90.3 148.0 89.2 C147.8 88.0 147.9 86.6 148.4 85.6 C149.0 84.6 150.0 84.0 151.4 83.3 C152.8 82.6 154.6 81.9 157.0 81.4 C159.3 80.8 162.1 80.3 165.4 79.8 C168.8 79.4 172.5 79.0 177.0 78.7 C181.5 78.4 185.8 78.2 192.3 78.1 C198.8 78.0 208.2 78.0 216.0 78.0 C223.8 78.1 232.8 78.3 238.9 78.5 C245.0 78.7 248.6 79.0 252.7 79.3 C256.7 79.6 260.0 80.0 263.2 80.4 C266.3 80.8 269.0 81.3 271.5 81.8 C274.0 82.3 276.2 82.9 278.0 83.5 C279.8 84.2 281.4 84.7 282.5 85.7 C283.7 86.6 284.5 88.0 284.8 89.2Z" fill="#ff0000"/>
<path d="M264.8 140.8 C265.0 142.1 264.8 143.5 264.2 144.5 C263.7 145.5 262.8 146.1 261.8 146.8 C260.7 147.5 259.4 148.0 258.0 148.6 C256.5 149.1 255.0 149.6 253.1 150.0 C251.2 150.4 249.2 150.8 246.7 151.0 C244.3 151.3 242.0 151.4 238.5 151.5 C235.0 151.6 230.1 151.5 226.0 151.5 C221.9 151.4 217.3 151.3 214.0 151.1 C210.7 151.0 208.6 150.8 206.2 150.6 C203.8 150.4 201.5 150.1 199.5 149.8 C197.4 149.5 195.4 149.1 193.9 148.6 C192.3 148.1 191.1 147.5 190.2 146.8 C189.2 146.1 188.7 145.4 188.4 144.4 C188.0 143.5 187.9 142.0 188.0 140.9 C188.0 139.7 188.2 138.3 188.5 137.3 C188.9 136.3 189.4 135.6 190.3 134.9 C191.2 134.2 192.4 133.6 193.8 133.1 C195.3 132.6 197.1 132.1 199.1 131.8 C201.1 131.4 203.3 131.2 205.7 130.9 C208.2 130.7 210.3 130.5 213.7 130.3 C217.0 130.2 221.8 130.1 226.0 130.0 C230.2 130.0 235.2 130.0 238.6 130.1 C242.0 130.2 244.2 130.5 246.5 130.8 C248.8 131.1 250.6 131.5 252.3 132.0 C254.0 132.4 255.4 132.9 256.7 133.4 C258.1 134.0 259.3 134.5 260.4 135.1 C261.5 135.8 262.6 136.3 263.4 137.3 C264.1 138.2 264.7 139.6 264.8 140.8Z" fill="#ff0000"/>
<path d="M274.5 174.3 C274.7 175.6 274.4 177.2 273.9 178.2 C273.3 179.3 272.3 179.9 271.1 180.6 C269.9 181.3 268.4 181.9 266.8 182.4 C265.2 183.0 263.4 183.4 261.5 183.8 C259.5 184.2 257.4 184.6 255.0 184.9 C252.5 185.2 250.3 185.4 246.7 185.5 C243.2 185.7 238.1 185.7 233.9 185.7 C229.6 185.6 224.6 185.5 221.2 185.3 C217.7 185.2 215.6 184.9 213.2 184.6 C210.8 184.3 208.8 184.0 206.9 183.6 C205.0 183.2 203.3 182.7 201.9 182.2 C200.4 181.7 199.2 181.1 198.3 180.4 C197.3 179.7 196.6 179.0 196.0 178.0 C195.5 177.0 195.2 175.6 195.0 174.4 C194.8 173.1 194.8 171.6 195.0 170.6 C195.2 169.5 195.5 168.8 196.3 168.0 C197.0 167.2 198.0 166.5 199.5 165.9 C200.9 165.3 202.8 164.8 204.9 164.4 C207.0 164.0 209.5 163.8 212.2 163.6 C214.9 163.4 217.4 163.3 221.1 163.3 C224.7 163.2 229.7 163.2 233.8 163.3 C238.0 163.4 242.8 163.5 246.2 163.6 C249.6 163.8 251.7 164.0 254.0 164.3 C256.4 164.5 258.4 164.9 260.3 165.3 C262.2 165.6 263.9 166.1 265.5 166.6 C267.1 167.1 268.5 167.6 269.8 168.3 C271.0 169.0 272.2 169.5 273.0 170.6 C273.7 171.6 274.4 173.1 274.5 174.3Z" fill="#ff0000"/>
<path d="M260.6 211.3 C260.3 212.2 260.0 213.3 259.5 214.0 C259.1 214.7 258.5 215.1 257.9 215.7 C257.2 216.2 256.4 216.6 255.5 217.0 C254.5 217.5 253.4 217.8 252.0 218.2 C250.7 218.5 249.2 218.8 247.4 219.0 C245.6 219.3 244.0 219.5 241.3 219.6 C238.6 219.7 234.7 219.8 231.4 219.8 C228.1 219.9 224.1 219.8 221.4 219.7 C218.7 219.6 216.9 219.4 215.0 219.2 C213.2 219.0 211.6 218.7 210.1 218.4 C208.7 218.1 207.4 217.7 206.3 217.3 C205.1 216.9 204.2 216.4 203.4 215.9 C202.6 215.4 201.9 214.9 201.5 214.1 C201.1 213.4 200.9 212.3 200.9 211.4 C201.0 210.4 201.3 209.3 201.8 208.6 C202.4 207.8 203.2 207.4 204.1 206.9 C205.0 206.4 206.1 206.0 207.3 205.7 C208.5 205.3 209.8 205.0 211.3 204.7 C212.7 204.4 214.2 204.2 216.0 203.9 C217.8 203.7 219.3 203.5 221.9 203.4 C224.5 203.3 228.2 203.1 231.4 203.1 C234.6 203.0 238.6 203.0 241.4 203.0 C244.2 203.1 246.1 203.2 248.2 203.3 C250.2 203.5 252.1 203.7 253.7 204.0 C255.3 204.3 256.7 204.7 257.7 205.1 C258.8 205.6 259.6 206.1 260.1 206.7 C260.6 207.3 260.8 207.8 260.9 208.6 C261.0 209.4 260.8 210.5 260.6 211.3Z" fill="#ff0000"/>
<path d="M278.9 242.3 C278.9 243.7 278.8 245.3 278.2 246.4 C277.7 247.5 276.7 248.2 275.5 249.0 C274.3 249.7 272.6 250.3 270.9 250.9 C269.1 251.4 267.1 251.8 264.9 252.2 C262.7 252.6 260.5 252.9 257.9 253.2 C255.3 253.5 253.1 253.7 249.5 253.9 C245.8 254.1 240.6 254.3 236.1 254.3 C231.6 254.4 226.1 254.4 222.2 254.3 C218.4 254.3 215.8 254.1 212.9 253.9 C210.0 253.7 207.4 253.4 205.1 252.9 C202.8 252.5 200.6 252.0 198.9 251.4 C197.2 250.8 195.7 250.1 194.8 249.3 C193.8 248.5 193.3 247.6 193.1 246.5 C193.0 245.3 193.3 243.6 193.8 242.3 C194.3 241.0 195.1 239.4 196.0 238.4 C196.8 237.3 197.8 236.7 198.9 236.0 C200.0 235.3 201.1 234.6 202.5 234.0 C203.9 233.4 205.4 232.9 207.3 232.4 C209.1 231.9 211.2 231.4 213.7 231.1 C216.1 230.7 218.5 230.4 222.2 230.2 C226.0 230.0 231.4 229.9 236.1 229.9 C240.8 229.8 246.4 229.8 250.3 230.0 C254.2 230.1 256.8 230.3 259.5 230.6 C262.2 230.9 264.5 231.3 266.6 231.8 C268.6 232.3 270.3 232.9 271.7 233.5 C273.2 234.2 274.4 234.9 275.4 235.7 C276.4 236.4 277.2 237.1 277.7 238.2 C278.3 239.4 278.8 240.9 278.9 242.3Z" fill="#ff0000"/>
<path d="M260.5 279.9 C260.6 280.9 260.6 282.1 260.4 283.0 C260.3 283.8 260.0 284.4 259.5 285.0 C259.0 285.6 258.3 286.2 257.4 286.6 C256.6 287.1 255.5 287.5 254.3 287.8 C253.1 288.1 251.7 288.3 250.3 288.5 C248.8 288.7 247.5 288.9 245.4 289.0 C243.4 289.1 240.5 289.2 238.1 289.2 C235.6 289.2 232.6 289.2 230.6 289.1 C228.5 288.9 227.2 288.8 225.8 288.5 C224.4 288.3 223.3 288.0 222.2 287.6 C221.1 287.2 220.2 286.8 219.4 286.4 C218.6 285.9 217.9 285.4 217.3 284.9 C216.8 284.3 216.3 283.8 215.9 282.9 C215.6 282.1 215.4 280.9 215.4 279.9 C215.4 278.9 215.6 277.7 215.9 276.9 C216.2 276.0 216.7 275.5 217.3 274.9 C217.8 274.3 218.5 273.8 219.2 273.4 C220.0 272.9 220.8 272.4 221.9 272.0 C222.9 271.7 224.1 271.3 225.5 271.1 C226.9 270.8 228.3 270.6 230.4 270.5 C232.5 270.4 235.5 270.4 238.0 270.5 C240.6 270.5 243.5 270.7 245.5 270.8 C247.5 271.0 248.7 271.2 250.1 271.4 C251.4 271.7 252.6 271.9 253.7 272.3 C254.8 272.6 255.8 273.0 256.6 273.5 C257.4 273.9 258.1 274.4 258.7 275.0 C259.2 275.5 259.6 276.1 259.9 276.9 C260.2 277.7 260.4 278.9 260.5 279.9Z" fill="#ff0000"/>
<path d="M267.0 313.9 C267.1 314.9 267.0 316.1 266.7 317.0 C266.4 317.8 265.8 318.3 265.1 318.9 C264.3 319.5 263.3 320.0 262.2 320.4 C261.1 320.8 259.8 321.2 258.3 321.5 C256.9 321.8 255.3 322.1 253.4 322.3 C251.6 322.4 249.9 322.6 247.4 322.6 C244.9 322.7 241.3 322.7 238.3 322.7 C235.3 322.7 231.8 322.6 229.4 322.5 C226.9 322.4 225.3 322.3 223.4 322.1 C221.6 322.0 219.8 321.8 218.2 321.5 C216.7 321.3 215.2 320.9 214.0 320.5 C212.8 320.1 211.7 319.6 211.0 319.0 C210.2 318.4 209.8 317.8 209.5 317.0 C209.3 316.1 209.3 314.9 209.5 313.9 C209.6 312.9 210.0 311.7 210.5 310.9 C211.0 310.1 211.6 309.6 212.4 309.1 C213.2 308.5 214.1 308.0 215.2 307.6 C216.3 307.2 217.5 306.8 218.9 306.5 C220.2 306.2 221.7 305.9 223.4 305.7 C225.1 305.4 226.6 305.2 229.1 305.1 C231.6 304.9 235.2 304.8 238.3 304.8 C241.4 304.7 245.2 304.7 247.7 304.8 C250.3 304.9 252.0 305.1 253.8 305.4 C255.5 305.6 257.0 305.9 258.3 306.3 C259.6 306.7 260.6 307.1 261.6 307.6 C262.6 308.0 263.4 308.5 264.2 309.1 C264.9 309.6 265.6 310.1 266.0 310.9 C266.5 311.7 266.9 312.9 267.0 313.9Z" fill="#ff0000"/>
<path d="M262.7 348.9 C262.6 350.2 262.5 351.8 262.3 353.0 C262.0 354.1 261.7 354.9 261.2 355.7 C260.7 356.5 260.1 357.3 259.4 357.9 C258.6 358.6 257.7 359.3 256.6 359.8 C255.5 360.4 254.3 360.9 252.8 361.2 C251.3 361.6 249.9 361.9 247.7 362.1 C245.5 362.2 242.2 362.3 239.5 362.3 C236.8 362.2 233.6 362.1 231.5 361.8 C229.3 361.6 228.0 361.3 226.5 360.9 C225.1 360.6 223.8 360.1 222.7 359.6 C221.5 359.1 220.5 358.6 219.6 358.0 C218.7 357.3 217.9 356.7 217.3 355.8 C216.7 355.0 216.2 354.3 215.9 353.1 C215.6 352.0 215.5 350.3 215.5 348.9 C215.5 347.4 215.7 345.8 216.0 344.6 C216.3 343.4 216.8 342.7 217.4 341.9 C218.1 341.1 218.8 340.4 219.7 339.8 C220.6 339.2 221.6 338.6 222.8 338.1 C223.9 337.7 225.2 337.3 226.7 336.9 C228.1 336.6 229.5 336.3 231.6 336.1 C233.7 335.9 236.8 335.7 239.5 335.6 C242.2 335.6 245.4 335.6 247.7 335.7 C249.9 335.8 251.4 336.0 253.0 336.3 C254.6 336.6 255.9 337.1 257.1 337.6 C258.2 338.2 259.1 338.8 259.9 339.5 C260.7 340.2 261.2 341.0 261.6 341.9 C262.1 342.7 262.3 343.5 262.5 344.7 C262.7 345.8 262.7 347.5 262.7 348.9Z" fill="#ff0000"/>
<path d="M262.3 383.9 C262.4 385.0 262.2 386.3 262.0 387.2 C261.7 388.1 261.4 388.7 260.8 389.4 C260.2 390.1 259.4 390.7 258.1 391.3 C256.9 391.9 255.3 392.4 253.3 392.8 C251.4 393.2 249.0 393.5 246.4 393.7 C243.8 393.9 241.3 394.0 237.7 394.1 C234.1 394.1 229.0 394.1 224.7 394.1 C220.4 394.1 215.4 394.0 211.9 393.9 C208.4 393.8 206.2 393.6 203.8 393.3 C201.4 393.1 199.3 392.7 197.5 392.3 C195.7 391.9 194.3 391.5 193.0 390.9 C191.7 390.4 190.7 389.9 189.8 389.2 C188.8 388.6 188.0 388.1 187.4 387.2 C186.8 386.3 186.2 385.0 186.0 383.9 C185.9 382.8 185.9 381.5 186.4 380.5 C186.8 379.6 187.6 379.0 188.6 378.4 C189.6 377.8 191.0 377.2 192.4 376.7 C193.8 376.2 195.4 375.8 197.3 375.4 C199.1 375.0 201.0 374.6 203.4 374.3 C205.7 374.0 207.9 373.7 211.5 373.5 C215.0 373.4 220.3 373.3 224.7 373.3 C229.1 373.4 234.3 373.5 237.7 373.7 C241.2 373.9 243.3 374.2 245.6 374.5 C247.9 374.8 249.8 375.2 251.6 375.6 C253.4 376.0 255.0 376.4 256.4 376.9 C257.8 377.4 259.0 377.9 259.9 378.5 C260.8 379.2 261.4 379.7 261.8 380.6 C262.2 381.5 262.3 382.8 262.3 383.9Z" fill="#ff0000"/>
<path d="M269.0 418.9 C269.0 420.2 268.8 421.8 268.3 422.9 C267.9 424.0 267.2 424.7 266.2 425.5 C265.3 426.3 264.1 426.9 262.7 427.5 C261.3 428.2 259.6 428.7 257.7 429.2 C255.8 429.6 253.6 430.0 251.1 430.3 C248.6 430.6 246.3 430.8 242.7 430.9 C239.2 431.0 234.0 431.1 229.8 431.0 C225.6 430.9 220.6 430.8 217.2 430.6 C213.9 430.4 211.8 430.1 209.5 429.8 C207.2 429.4 205.3 429.0 203.4 428.6 C201.6 428.2 199.9 427.7 198.4 427.2 C196.9 426.6 195.6 426.0 194.4 425.3 C193.2 424.6 192.2 424.0 191.5 422.9 C190.8 421.8 190.2 420.3 190.0 418.9 C189.8 417.5 189.9 415.9 190.2 414.8 C190.6 413.7 191.3 412.9 192.3 412.1 C193.4 411.3 194.7 410.7 196.3 410.1 C197.9 409.5 199.8 409.0 201.9 408.7 C204.0 408.3 206.4 408.0 208.9 407.7 C211.5 407.5 213.8 407.4 217.3 407.3 C220.8 407.2 225.6 407.1 229.8 407.1 C234.0 407.2 238.8 407.2 242.2 407.3 C245.6 407.5 247.9 407.7 250.3 407.9 C252.8 408.2 255.0 408.5 257.0 408.9 C258.9 409.3 260.7 409.8 262.2 410.4 C263.7 411.0 264.9 411.6 265.9 412.4 C266.9 413.1 267.7 413.8 268.2 414.9 C268.7 416.0 269.0 417.6 269.0 418.9Z" fill="#ff0000"/>
<path d="M261.6 453.4 C261.4 454.5 260.9 455.7 260.4 456.6 C260.0 457.4 259.3 457.9 258.6 458.5 C258.0 459.0 257.2 459.5 256.4 460.0 C255.5 460.4 254.6 460.8 253.5 461.2 C252.4 461.5 251.3 461.8 249.9 462.0 C248.5 462.2 247.2 462.4 245.3 462.5 C243.3 462.7 240.5 462.8 238.1 462.8 C235.6 462.8 232.7 462.9 230.6 462.8 C228.6 462.7 227.1 462.6 225.6 462.4 C224.1 462.2 222.8 462.0 221.7 461.6 C220.5 461.3 219.6 460.8 218.8 460.3 C218.0 459.8 217.4 459.2 216.9 458.6 C216.4 458.0 216.1 457.4 215.8 456.6 C215.5 455.7 215.2 454.5 215.1 453.4 C215.1 452.3 215.1 451.1 215.3 450.2 C215.6 449.3 216.0 448.7 216.6 448.1 C217.3 447.5 218.1 447.0 219.1 446.6 C220.0 446.2 221.2 445.8 222.4 445.5 C223.5 445.2 224.8 445.0 226.2 444.8 C227.6 444.6 228.9 444.4 230.8 444.3 C232.8 444.1 235.6 444.1 238.0 444.1 C240.5 444.1 243.3 444.1 245.3 444.2 C247.3 444.3 248.5 444.5 250.0 444.7 C251.4 444.9 252.7 445.1 254.0 445.4 C255.2 445.7 256.4 446.0 257.4 446.5 C258.4 446.9 259.4 447.4 260.1 448.0 C260.8 448.6 261.3 449.2 261.6 450.1 C261.8 451.0 261.8 452.3 261.6 453.4Z" fill="#ff0000"/>
<path d="M287.0 488.1 C286.8 489.3 286.2 490.6 285.3 491.5 C284.5 492.4 283.2 493.0 281.8 493.6 C280.4 494.2 278.9 494.7 277.1 495.3 C275.3 495.8 273.4 496.3 271.0 496.7 C268.6 497.1 266.0 497.5 262.8 497.8 C259.6 498.1 256.4 498.3 251.7 498.4 C246.9 498.5 240.0 498.5 234.2 498.5 C228.4 498.4 221.8 498.3 217.1 498.2 C212.4 498.0 209.4 497.9 206.0 497.7 C202.6 497.4 199.4 497.2 196.6 496.9 C193.8 496.5 191.1 496.1 189.0 495.6 C186.9 495.1 185.2 494.6 183.9 493.9 C182.6 493.2 181.9 492.6 181.4 491.6 C181.0 490.7 180.9 489.3 181.1 488.2 C181.2 487.0 181.6 485.7 182.4 484.7 C183.1 483.8 184.1 483.2 185.5 482.6 C187.0 482.0 188.8 481.4 190.9 481.0 C193.0 480.5 195.5 480.1 198.2 479.8 C200.9 479.5 203.8 479.2 207.0 479.0 C210.2 478.7 212.9 478.5 217.4 478.3 C221.9 478.1 228.4 477.9 234.2 477.8 C240.0 477.7 247.1 477.7 252.0 477.7 C256.9 477.8 260.3 478.0 263.7 478.2 C267.2 478.5 270.0 478.8 272.6 479.3 C275.1 479.7 277.1 480.2 278.9 480.7 C280.8 481.3 282.3 481.9 283.5 482.5 C284.7 483.2 285.7 483.8 286.3 484.7 C286.9 485.7 287.2 487.0 287.0 488.1Z" fill="#ff0000"/>
<path d="M276.7 519.2 C276.7 520.4 276.5 521.8 276.0 522.7 C275.5 523.7 274.8 524.3 273.8 525.0 C272.7 525.6 271.4 526.2 269.9 526.7 C268.4 527.2 266.7 527.7 264.7 528.1 C262.7 528.5 260.6 528.8 258.1 529.1 C255.6 529.4 253.3 529.6 249.6 529.8 C246.0 529.9 240.7 530.0 236.2 530.0 C231.6 530.1 226.3 530.0 222.5 529.9 C218.8 529.8 216.3 529.6 213.7 529.3 C211.0 529.1 208.6 528.8 206.5 528.4 C204.3 528.0 202.4 527.6 200.8 527.1 C199.2 526.5 197.9 525.9 197.0 525.2 C196.0 524.5 195.5 523.8 195.2 522.8 C195.0 521.8 195.1 520.4 195.4 519.3 C195.7 518.1 196.3 516.8 197.0 515.8 C197.7 514.9 198.6 514.3 199.6 513.7 C200.6 513.0 201.7 512.5 203.1 511.9 C204.5 511.4 206.0 510.9 207.9 510.5 C209.7 510.1 211.8 509.7 214.2 509.4 C216.7 509.1 218.9 508.8 222.6 508.6 C226.2 508.5 231.6 508.3 236.1 508.3 C240.7 508.2 246.3 508.2 250.1 508.3 C254.0 508.5 256.5 508.6 259.2 508.9 C261.8 509.2 264.0 509.6 266.0 510.0 C267.9 510.5 269.4 511.0 270.8 511.6 C272.1 512.2 273.1 512.8 273.9 513.5 C274.8 514.2 275.4 514.8 275.9 515.8 C276.3 516.7 276.6 518.1 276.7 519.2Z" fill="#ff0000"/>
<path d="M271.1 553.2 C271.0 554.4 270.4 555.7 269.8 556.6 C269.1 557.5 268.2 558.0 267.2 558.7 C266.2 559.3 265.1 559.8 263.7 560.4 C262.4 560.9 261.0 561.4 259.2 561.8 C257.3 562.2 255.3 562.5 252.8 562.8 C250.4 563.0 248.0 563.2 244.5 563.2 C241.0 563.3 235.9 563.3 231.8 563.3 C227.6 563.2 222.8 563.1 219.3 563.0 C215.9 562.9 213.6 562.8 211.1 562.6 C208.5 562.4 206.1 562.2 204.0 561.9 C201.8 561.6 199.8 561.2 198.2 560.7 C196.6 560.2 195.3 559.6 194.3 559.0 C193.3 558.3 192.7 557.7 192.2 556.7 C191.8 555.8 191.7 554.4 191.7 553.3 C191.8 552.1 192.1 550.7 192.7 549.8 C193.3 548.9 194.2 548.3 195.4 547.7 C196.5 547.1 198.1 546.6 199.8 546.2 C201.5 545.7 203.5 545.4 205.5 545.1 C207.5 544.8 209.6 544.5 211.9 544.3 C214.3 544.0 216.2 543.8 219.5 543.6 C222.8 543.4 227.5 543.2 231.7 543.1 C236.0 543.0 241.2 542.9 244.8 543.0 C248.5 543.1 250.9 543.2 253.4 543.5 C256.0 543.7 258.1 544.1 260.0 544.5 C261.9 544.9 263.5 545.4 264.9 545.9 C266.4 546.4 267.6 547.0 268.6 547.6 C269.5 548.3 270.3 548.9 270.8 549.8 C271.2 550.8 271.3 552.1 271.1 553.2Z" fill="#ff0000"/>
<path d="M264.3 588.5 C264.3 589.8 264.0 591.4 263.4 592.4 C262.9 593.5 262.1 594.1 261.2 594.7 C260.3 595.4 259.2 596.0 258.0 596.5 C256.9 597.0 255.6 597.4 254.3 597.8 C252.9 598.1 251.5 598.5 249.9 598.7 C248.2 599.0 246.8 599.3 244.4 599.4 C242.1 599.6 238.7 599.7 235.8 599.7 C232.8 599.8 229.4 599.8 226.9 599.7 C224.4 599.6 222.8 599.4 221.0 599.2 C219.2 599.0 217.6 598.7 216.1 598.3 C214.7 597.9 213.4 597.4 212.4 596.8 C211.3 596.3 210.5 595.6 209.9 594.9 C209.3 594.1 208.9 593.4 208.6 592.3 C208.4 591.3 208.4 589.8 208.4 588.5 C208.5 587.2 208.7 585.8 209.0 584.7 C209.3 583.7 209.8 583.0 210.4 582.3 C211.1 581.5 211.9 580.9 212.9 580.3 C213.9 579.8 215.1 579.3 216.5 578.9 C217.9 578.5 219.5 578.2 221.2 578.0 C223.0 577.7 224.6 577.6 227.0 577.5 C229.4 577.3 232.8 577.3 235.7 577.3 C238.7 577.3 242.1 577.4 244.5 577.5 C246.9 577.6 248.4 577.8 250.2 578.0 C251.9 578.3 253.4 578.6 254.8 579.0 C256.2 579.4 257.4 579.8 258.6 580.4 C259.7 580.9 260.7 581.5 261.6 582.2 C262.4 582.9 263.2 583.5 263.6 584.6 C264.1 585.6 264.3 587.2 264.3 588.5Z" fill="#ff0000"/>
<path d="M262.1 621.1 C262.1 622.2 262.1 623.5 261.7 624.3 C261.3 625.2 260.6 625.8 259.7 626.4 C258.8 627.0 257.5 627.5 256.1 627.9 C254.6 628.4 253.0 628.8 251.2 629.1 C249.5 629.5 247.6 629.8 245.4 630.1 C243.2 630.4 241.3 630.7 238.0 630.9 C234.6 631.1 229.7 631.2 225.6 631.2 C221.4 631.2 216.4 631.1 213.1 630.9 C209.8 630.8 207.8 630.4 205.7 630.1 C203.6 629.8 202.0 629.4 200.5 628.9 C198.9 628.5 197.6 628.1 196.3 627.7 C195.0 627.2 193.8 626.7 192.8 626.2 C191.8 625.6 190.9 625.1 190.3 624.2 C189.7 623.4 189.4 622.2 189.3 621.2 C189.1 620.1 189.3 618.9 189.6 618.0 C189.9 617.1 190.3 616.5 191.0 615.9 C191.7 615.2 192.6 614.6 193.8 614.1 C195.0 613.6 196.5 613.1 198.4 612.7 C200.2 612.4 202.5 612.1 205.0 611.9 C207.5 611.7 210.0 611.7 213.4 611.6 C216.8 611.6 221.6 611.7 225.5 611.7 C229.5 611.8 234.0 611.9 237.2 612.0 C240.4 612.1 242.6 612.2 244.9 612.4 C247.3 612.6 249.5 612.8 251.4 613.1 C253.3 613.4 255.0 613.9 256.3 614.3 C257.6 614.8 258.6 615.4 259.5 616.0 C260.3 616.6 260.8 617.1 261.3 618.0 C261.7 618.9 262.0 620.1 262.1 621.1Z" fill="#ff0000"/>
<path d="M269.2 654.7 C269.3 655.9 269.2 657.3 268.8 658.3 C268.5 659.3 267.9 659.9 267.1 660.6 C266.3 661.3 265.1 661.9 263.8 662.4 C262.5 662.9 260.8 663.3 259.1 663.7 C257.3 664.1 255.4 664.3 253.2 664.6 C251.1 664.8 249.2 665.0 246.2 665.2 C243.2 665.3 238.9 665.4 235.2 665.5 C231.4 665.5 227.0 665.5 223.9 665.3 C220.9 665.2 218.9 665.0 216.9 664.7 C214.8 664.4 213.2 664.0 211.7 663.5 C210.2 663.1 209.0 662.6 208.0 662.0 C206.9 661.5 206.0 660.9 205.2 660.2 C204.4 659.6 203.7 659.0 203.2 658.1 C202.7 657.2 202.2 655.9 202.1 654.7 C201.9 653.5 201.9 652.2 202.1 651.2 C202.4 650.2 202.8 649.6 203.5 648.8 C204.2 648.1 205.1 647.5 206.2 646.9 C207.3 646.3 208.6 645.8 210.3 645.4 C211.9 644.9 213.9 644.6 216.1 644.3 C218.3 644.1 220.6 643.9 223.7 643.9 C226.9 643.8 231.5 643.9 235.1 644.0 C238.8 644.1 243.0 644.3 245.8 644.6 C248.7 644.8 250.4 645.0 252.4 645.3 C254.4 645.6 256.1 645.8 257.8 646.2 C259.5 646.5 261.1 646.9 262.5 647.4 C263.8 647.8 265.1 648.3 266.0 649.0 C267.0 649.6 267.7 650.2 268.3 651.2 C268.8 652.1 269.1 653.5 269.2 654.7Z" fill="#ff0000"/>
<path d="M274.2 696.8 C274.3 697.8 274.2 699.1 273.8 700.1 C273.5 701.0 273.0 701.6 272.1 702.3 C271.3 702.9 270.2 703.5 268.7 704.1 C267.3 704.6 265.5 705.1 263.4 705.5 C261.3 705.8 258.8 706.1 256.0 706.4 C253.3 706.6 250.7 706.7 246.8 706.8 C242.9 706.9 237.4 707.0 232.7 707.0 C228.0 707.0 222.5 706.9 218.7 706.8 C214.8 706.7 212.2 706.6 209.4 706.3 C206.7 706.1 204.2 705.8 202.1 705.4 C199.9 705.1 198.1 704.6 196.6 704.1 C195.1 703.6 193.9 703.0 193.0 702.3 C192.1 701.6 191.5 701.0 191.1 700.1 C190.7 699.2 190.6 697.9 190.7 696.8 C190.8 695.6 191.2 694.4 191.8 693.5 C192.5 692.6 193.3 692.0 194.4 691.4 C195.5 690.8 196.7 690.2 198.2 689.7 C199.7 689.2 201.2 688.8 203.1 688.4 C205.0 687.9 207.0 687.5 209.5 687.2 C212.0 686.9 214.3 686.6 218.2 686.4 C222.1 686.2 227.8 686.0 232.7 686.0 C237.6 686.0 243.4 686.1 247.3 686.3 C251.2 686.4 253.7 686.7 256.2 687.0 C258.8 687.4 260.9 687.8 262.8 688.2 C264.7 688.6 266.3 689.1 267.7 689.6 C269.1 690.2 270.2 690.7 271.2 691.4 C272.1 692.0 272.8 692.6 273.3 693.5 C273.8 694.4 274.1 695.7 274.2 696.8Z" fill="#ff0000"/>
<path d="M266.4 727.5 C266.5 728.6 266.4 730.0 266.0 730.9 C265.7 731.9 265.1 732.5 264.2 733.1 C263.3 733.8 262.1 734.4 260.7 734.9 C259.2 735.4 257.5 735.8 255.6 736.1 C253.7 736.5 251.5 736.7 249.1 737.0 C246.7 737.2 244.5 737.3 241.2 737.4 C237.9 737.4 233.3 737.5 229.4 737.4 C225.4 737.4 220.9 737.3 217.7 737.2 C214.5 737.1 212.4 736.9 210.1 736.7 C207.8 736.5 205.8 736.2 203.9 735.9 C202.0 735.6 200.3 735.2 198.8 734.7 C197.3 734.2 196.0 733.7 194.9 733.1 C193.9 732.4 193.1 731.9 192.6 730.9 C192.1 730.0 191.8 728.6 191.9 727.5 C191.9 726.4 192.2 725.0 192.8 724.1 C193.3 723.2 194.1 722.6 195.1 722.0 C196.1 721.3 197.4 720.8 198.8 720.3 C200.2 719.8 201.8 719.4 203.6 719.0 C205.5 718.7 207.4 718.4 209.7 718.1 C212.0 717.9 214.1 717.7 217.4 717.5 C220.6 717.4 225.4 717.3 229.3 717.4 C233.3 717.4 238.1 717.4 241.3 717.6 C244.6 717.7 246.7 717.9 248.9 718.1 C251.2 718.4 253.1 718.7 254.9 719.1 C256.6 719.5 258.2 719.9 259.5 720.4 C260.9 720.9 262.0 721.4 263.0 722.1 C263.9 722.7 264.7 723.2 265.3 724.2 C265.8 725.1 266.2 726.4 266.4 727.5Z" fill="#ff0000"/>
<path d="M262.8 758.6 C262.7 759.8 262.4 761.2 261.9 762.1 C261.5 763.1 260.8 763.7 259.9 764.3 C259.0 765.0 258.0 765.6 256.7 766.1 C255.5 766.6 254.0 767.0 252.4 767.4 C250.7 767.8 248.9 768.1 246.7 768.4 C244.6 768.6 242.6 768.8 239.6 768.9 C236.6 769.0 232.3 769.0 228.7 769.0 C225.0 768.9 220.9 768.8 218.0 768.7 C215.1 768.5 213.3 768.3 211.2 768.1 C209.2 767.8 207.4 767.5 205.6 767.2 C203.9 766.9 202.2 766.5 200.8 766.0 C199.3 765.6 197.9 765.1 196.8 764.4 C195.7 763.8 194.8 763.2 194.2 762.2 C193.6 761.3 193.2 759.8 193.2 758.6 C193.1 757.4 193.4 755.9 194.0 754.9 C194.5 754.0 195.4 753.4 196.5 752.7 C197.6 752.1 199.0 751.5 200.5 751.1 C202.0 750.6 203.7 750.3 205.5 750.0 C207.3 749.7 209.3 749.4 211.4 749.2 C213.5 749.0 215.3 748.9 218.2 748.8 C221.1 748.6 225.1 748.5 228.6 748.5 C232.2 748.4 236.4 748.4 239.4 748.4 C242.5 748.5 244.6 748.6 246.8 748.8 C249.1 749.0 251.1 749.2 252.9 749.6 C254.7 749.9 256.2 750.4 257.5 750.9 C258.8 751.4 259.9 752.0 260.7 752.7 C261.5 753.4 262.0 754.1 262.4 755.0 C262.7 756.0 262.9 757.4 262.8 758.6Z" fill="#ff0000"/>
<path d="M272.6 793.7 C272.6 794.8 272.3 796.3 271.8 797.2 C271.3 798.2 270.5 798.8 269.6 799.5 C268.6 800.2 267.4 800.8 266.1 801.3 C264.7 801.9 263.3 802.4 261.5 802.9 C259.7 803.3 257.7 803.7 255.3 804.0 C252.9 804.4 250.7 804.6 247.1 804.8 C243.5 804.9 238.2 804.9 233.9 804.9 C229.5 804.8 224.4 804.7 221.0 804.5 C217.6 804.2 215.6 803.9 213.3 803.6 C211.1 803.3 209.2 802.9 207.4 802.5 C205.6 802.1 204.0 801.6 202.6 801.1 C201.2 800.6 200.0 800.0 198.9 799.4 C197.9 798.7 197.1 798.1 196.4 797.2 C195.8 796.2 195.4 794.8 195.1 793.7 C194.9 792.5 194.9 791.0 195.1 790.0 C195.4 789.0 195.8 788.3 196.7 787.6 C197.5 786.8 198.7 786.2 200.2 785.6 C201.7 785.1 203.5 784.6 205.6 784.3 C207.7 783.9 210.2 783.6 212.8 783.4 C215.4 783.2 217.8 783.1 221.3 783.1 C224.8 783.0 229.7 782.9 233.8 782.9 C238.0 782.9 242.9 783.0 246.4 783.1 C249.9 783.2 252.2 783.3 254.6 783.6 C257.1 783.8 259.3 784.1 261.2 784.5 C263.1 784.9 264.7 785.4 266.1 786.0 C267.6 786.5 268.7 787.1 269.7 787.8 C270.6 788.5 271.4 789.1 271.8 790.1 C272.3 791.0 272.6 792.5 272.6 793.7Z" fill="#ff0000"/>
<path d="M1498 13 C1560 10 1700 8 1771 12" stroke="#ff0000" stroke-width="13" stroke-linecap="round" fill="none"/>
<path d="M1510 30.5 C1580 28 1700 27 1773 28" stroke="#ff0000" stroke-width="12" stroke-linecap="round" fill="none"/>
<path d="M1562 9 C1620 7 1700 6 1776 8 L1778 30 C1740 35 1700 38 1640 38 C1600 38 1575 37 1562 35 Z" fill="#ff0000"/>
<rect x="1647" y="1.5" width="112" height="14" rx="7" fill="#ff0000"/>
<path d="M375 398.5 C400 404 420 410 441 410.5 C470 412 500 414 526 415.3" stroke="#ff0000" stroke-width="6.5" stroke-linecap="round" fill="none"/>
<path d="M507 396 C512 400 520 406 526 413 M491 429.5 C502 424 515 421.5 527 421.4" stroke="#ff0000" stroke-width="6.5" stroke-linecap="round" fill="none"/>
<circle cx="507.5" cy="397.5" r="4.5" fill="#ff0000"/>
<path d="M531 397.5 L571 397 L570.5 430.5 L532 431 Z" stroke="#ff0000" stroke-width="6.5" stroke-linejoin="round" fill="none"/>
<path d="M716 408 L830 408 Q834.5 409 833 413 L823 423 Q816 428 805 427.5 L722 427.5 Q711.5 427 711.5 418 Q711.5 408.5 716 408 Z" fill="#ff0000"/>
<path d="M718 453.5 C780 452 860 452 907 453.5" stroke="#ff0000" stroke-width="9.5" stroke-linecap="round" fill="none"/><path d="M732 460 C800 461 870 462 909 460" stroke="#ff0000" stroke-width="10" stroke-linecap="round" fill="none"/>
<path d="M1072.2 456.4 C1072.2 457.6 1071.7 459.1 1070.7 460.1 C1069.7 461.1 1068.2 461.8 1066.2 462.5 C1064.2 463.2 1061.7 463.7 1058.9 464.3 C1056.1 464.8 1052.8 465.3 1049.2 465.7 C1045.5 466.1 1041.6 466.5 1036.9 466.7 C1032.3 467.0 1028.1 467.3 1021.4 467.4 C1014.7 467.5 1004.9 467.6 996.8 467.6 C988.6 467.5 979.1 467.4 972.7 467.2 C966.2 467.0 962.3 466.7 957.9 466.4 C953.5 466.1 949.8 465.8 946.0 465.4 C942.3 465.0 938.9 464.6 935.7 464.1 C932.5 463.7 929.3 463.1 926.9 462.5 C924.4 461.8 922.2 461.2 920.8 460.2 C919.4 459.2 918.6 457.7 918.6 456.4 C918.5 455.1 919.1 453.6 920.2 452.6 C921.4 451.5 923.2 450.9 925.4 450.2 C927.6 449.5 930.3 448.9 933.5 448.4 C936.7 447.9 940.4 447.5 944.4 447.1 C948.5 446.8 952.9 446.6 957.8 446.4 C962.6 446.2 967.0 446.1 973.5 446.0 C980.0 445.9 988.9 445.8 996.7 445.8 C1004.6 445.7 1013.8 445.7 1020.5 445.7 C1027.2 445.8 1032.0 445.9 1037.0 446.0 C1042.0 446.2 1046.7 446.5 1050.7 446.8 C1054.7 447.2 1058.2 447.7 1061.0 448.3 C1063.8 448.8 1065.9 449.5 1067.6 450.2 C1069.3 451.0 1070.4 451.6 1071.2 452.7 C1072.0 453.7 1072.3 455.2 1072.2 456.4Z" fill="#ff0000"/>
<path d="M868.9 659.2 C869.1 660.5 869.2 662.0 869.0 663.0 C868.8 664.1 868.5 664.9 867.7 665.6 C866.9 666.4 865.7 667.1 864.2 667.7 C862.7 668.3 860.7 668.8 858.5 669.2 C856.4 669.6 853.9 669.8 851.2 670.1 C848.6 670.4 846.2 670.5 842.6 670.7 C838.9 670.8 833.7 671.0 829.2 671.0 C824.7 671.0 819.3 671.0 815.6 670.9 C811.9 670.8 809.4 670.6 806.8 670.3 C804.3 669.9 802.2 669.5 800.2 669.1 C798.2 668.6 796.6 668.1 795.1 667.5 C793.6 666.9 792.3 666.3 791.2 665.6 C790.2 664.8 789.2 664.2 788.7 663.1 C788.2 662.0 788.0 660.5 788.2 659.2 C788.3 657.9 788.9 656.4 789.6 655.4 C790.4 654.4 791.4 653.8 792.5 653.0 C793.6 652.3 794.8 651.7 796.1 651.1 C797.5 650.5 798.8 650.0 800.5 649.4 C802.3 648.9 804.2 648.4 806.7 648.1 C809.1 647.7 811.5 647.4 815.3 647.2 C819.0 647.1 824.6 647.0 829.2 647.1 C833.8 647.1 839.2 647.2 842.9 647.4 C846.6 647.6 848.9 647.9 851.4 648.2 C854.0 648.5 856.2 648.9 858.2 649.3 C860.2 649.8 861.9 650.3 863.2 650.9 C864.6 651.5 865.6 652.2 866.4 653.0 C867.3 653.7 867.7 654.4 868.1 655.4 C868.5 656.5 868.8 657.9 868.9 659.2Z" fill="#ff0000"/>
<path d="M1730.7 378.9 C1730.7 380.8 1730.6 383.0 1730.2 384.6 C1729.9 386.2 1729.5 387.3 1728.8 388.4 C1728.1 389.5 1727.2 390.5 1726.0 391.3 C1724.8 392.1 1723.3 392.8 1721.7 393.4 C1720.0 393.9 1718.2 394.3 1716.2 394.6 C1714.2 394.9 1712.5 395.2 1709.8 395.4 C1707.1 395.6 1703.3 395.8 1700.0 396.0 C1696.7 396.1 1692.6 396.3 1689.7 396.2 C1686.8 396.2 1684.8 396.0 1682.7 395.7 C1680.6 395.3 1678.8 394.8 1677.2 394.1 C1675.6 393.4 1674.3 392.6 1673.2 391.7 C1672.1 390.7 1671.3 389.7 1670.6 388.5 C1669.9 387.4 1669.4 386.3 1669.2 384.7 C1668.9 383.1 1668.8 380.8 1669.0 378.9 C1669.2 377.0 1669.7 374.8 1670.3 373.3 C1670.9 371.8 1671.8 370.9 1672.7 369.9 C1673.5 368.9 1674.5 368.1 1675.6 367.2 C1676.6 366.4 1677.6 365.6 1678.9 364.8 C1680.2 364.0 1681.5 363.3 1683.3 362.7 C1685.0 362.1 1686.7 361.5 1689.5 361.2 C1692.3 360.9 1696.5 360.8 1700.0 360.8 C1703.5 360.8 1707.6 361.1 1710.4 361.4 C1713.2 361.7 1714.9 362.1 1716.8 362.6 C1718.7 363.1 1720.4 363.6 1721.9 364.3 C1723.5 364.9 1724.9 365.6 1726.0 366.5 C1727.2 367.3 1728.1 368.3 1728.9 369.4 C1729.6 370.5 1730.0 371.6 1730.3 373.2 C1730.6 374.7 1730.7 377.0 1730.7 378.9Z" fill="#ff0000"/>
<ellipse cx="1733" cy="375" rx="26.5" ry="10.8" stroke="#ff0000" stroke-width="7" fill="none"/>
<path d="M1743.1 415.0 C1743.1 416.8 1742.7 418.9 1742.2 420.3 C1741.7 421.8 1741.0 422.7 1740.1 423.7 C1739.2 424.7 1738.2 425.5 1737.0 426.4 C1735.7 427.2 1734.4 427.9 1732.7 428.6 C1731.1 429.2 1729.2 429.7 1726.9 430.1 C1724.7 430.4 1722.5 430.6 1719.3 430.7 C1716.2 430.8 1711.7 430.7 1708.0 430.6 C1704.3 430.5 1700.1 430.3 1697.1 430.1 C1694.2 429.8 1692.3 429.6 1690.1 429.3 C1687.9 429.0 1685.8 428.7 1684.0 428.2 C1682.1 427.7 1680.4 427.1 1679.0 426.4 C1677.6 425.6 1676.4 424.8 1675.5 423.8 C1674.6 422.8 1674.1 421.8 1673.6 420.3 C1673.2 418.9 1673.0 416.8 1672.9 415.0 C1672.9 413.2 1672.9 411.1 1673.3 409.6 C1673.7 408.2 1674.3 407.2 1675.3 406.2 C1676.2 405.2 1677.5 404.3 1678.9 403.6 C1680.4 402.9 1682.2 402.3 1684.0 401.8 C1685.8 401.3 1687.8 401.0 1690.0 400.6 C1692.1 400.3 1694.0 399.9 1697.0 399.7 C1700.0 399.4 1704.3 399.2 1708.0 399.1 C1711.7 399.0 1716.3 399.0 1719.4 399.2 C1722.5 399.4 1724.6 399.7 1726.7 400.1 C1728.8 400.5 1730.5 401.1 1732.1 401.8 C1733.8 402.4 1735.1 403.1 1736.4 403.9 C1737.6 404.6 1738.8 405.5 1739.8 406.4 C1740.7 407.4 1741.6 408.3 1742.2 409.7 C1742.7 411.1 1743.0 413.2 1743.1 415.0Z" fill="#ff0000"/>
<circle cx="1717" cy="397" r="6.5" fill="#ff0000"/>
<path d="M1728.4 458.9 C1728.5 460.4 1728.5 462.1 1728.3 463.3 C1728.0 464.5 1727.6 465.3 1726.9 466.2 C1726.2 467.0 1725.2 467.7 1724.1 468.3 C1722.9 468.9 1721.5 469.4 1720.0 469.8 C1718.5 470.2 1716.8 470.5 1715.0 470.8 C1713.2 471.0 1711.7 471.2 1709.2 471.4 C1706.7 471.5 1703.3 471.7 1700.3 471.7 C1697.3 471.8 1693.7 471.8 1691.2 471.6 C1688.7 471.5 1687.1 471.3 1685.3 471.0 C1683.6 470.7 1682.1 470.2 1680.8 469.7 C1679.5 469.2 1678.4 468.6 1677.5 468.0 C1676.5 467.3 1675.7 466.6 1675.0 465.8 C1674.3 465.0 1673.7 464.3 1673.3 463.2 C1673.0 462.0 1672.7 460.4 1672.7 459.0 C1672.7 457.5 1672.8 455.9 1673.2 454.7 C1673.5 453.5 1674.0 452.8 1674.7 452.0 C1675.3 451.1 1676.0 450.4 1677.0 449.7 C1677.9 449.0 1678.9 448.4 1680.2 447.9 C1681.5 447.3 1683.0 446.9 1684.8 446.5 C1686.6 446.2 1688.3 446.0 1690.9 445.9 C1693.5 445.8 1697.3 445.8 1700.3 446.0 C1703.3 446.1 1706.8 446.3 1709.2 446.6 C1711.6 446.8 1713.0 447.1 1714.6 447.4 C1716.3 447.8 1717.7 448.1 1719.1 448.6 C1720.4 449.0 1721.7 449.5 1722.8 450.0 C1723.9 450.6 1724.9 451.3 1725.7 452.0 C1726.4 452.8 1727.0 453.5 1727.5 454.7 C1727.9 455.8 1728.2 457.5 1728.4 458.9Z" fill="#ff0000"/>
<path d="M1734.0 497.5 C1734.0 499.1 1733.5 501.0 1732.9 502.2 C1732.3 503.5 1731.3 504.3 1730.2 505.2 C1729.1 506.1 1727.9 506.9 1726.4 507.7 C1724.9 508.4 1723.4 509.1 1721.4 509.7 C1719.4 510.3 1717.2 510.9 1714.4 511.3 C1711.7 511.7 1709.0 512.0 1705.0 512.1 C1701.0 512.3 1695.1 512.3 1690.3 512.3 C1685.4 512.2 1679.7 512.1 1675.8 511.9 C1671.8 511.7 1669.3 511.4 1666.5 511.0 C1663.8 510.7 1661.4 510.2 1659.3 509.7 C1657.2 509.1 1655.5 508.4 1654.1 507.6 C1652.8 506.9 1651.9 506.0 1651.1 505.1 C1650.4 504.1 1650.0 503.3 1649.6 502.0 C1649.2 500.8 1648.9 499.0 1648.6 497.5 C1648.4 496.0 1648.1 494.1 1648.3 492.8 C1648.4 491.5 1648.6 490.6 1649.3 489.6 C1650.1 488.6 1651.2 487.7 1652.7 487.0 C1654.3 486.2 1656.3 485.6 1658.5 485.0 C1660.7 484.5 1663.3 484.1 1666.1 483.7 C1668.9 483.4 1671.5 483.1 1675.5 482.9 C1679.6 482.7 1685.4 482.6 1690.2 482.6 C1695.1 482.7 1700.9 482.8 1704.8 483.1 C1708.7 483.3 1711.0 483.7 1713.6 484.2 C1716.1 484.6 1718.1 485.2 1720.0 485.8 C1722.0 486.4 1723.6 487.0 1725.3 487.7 C1726.9 488.3 1728.4 489.0 1729.7 489.9 C1731.0 490.7 1732.2 491.5 1732.9 492.8 C1733.6 494.0 1734.0 495.9 1734.0 497.5Z" fill="#ff0000"/>
<path d="M1738.2 533.8 C1738.4 535.8 1738.4 538.2 1738.0 539.8 C1737.6 541.5 1737.0 542.6 1736.0 543.8 C1735.1 545.0 1733.8 546.1 1732.2 547.0 C1730.7 548.0 1728.9 548.8 1726.8 549.6 C1724.7 550.4 1722.4 551.1 1719.6 551.6 C1716.8 552.2 1714.2 552.6 1710.0 552.9 C1705.9 553.2 1699.8 553.3 1694.7 553.2 C1689.6 553.1 1683.7 552.8 1679.7 552.5 C1675.7 552.1 1673.3 551.6 1670.6 551.0 C1667.9 550.5 1665.7 549.9 1663.5 549.2 C1661.4 548.5 1659.4 547.8 1657.6 546.9 C1655.9 546.0 1654.3 545.1 1653.1 543.9 C1651.9 542.8 1650.9 541.7 1650.4 540.0 C1649.9 538.3 1649.8 535.8 1649.9 533.8 C1650.1 531.8 1650.6 529.4 1651.2 527.7 C1651.8 526.1 1652.6 525.0 1653.6 523.8 C1654.6 522.6 1655.8 521.6 1657.3 520.6 C1658.9 519.7 1660.7 518.8 1662.8 518.1 C1665.0 517.4 1667.5 516.8 1670.3 516.3 C1673.1 515.9 1675.8 515.5 1679.8 515.3 C1683.9 515.0 1689.7 514.9 1694.7 514.8 C1699.7 514.7 1705.7 514.7 1709.9 514.9 C1714.1 515.1 1716.9 515.3 1719.8 515.8 C1722.8 516.3 1725.3 516.9 1727.4 517.7 C1729.5 518.5 1731.0 519.5 1732.4 520.5 C1733.7 521.6 1734.6 522.7 1735.4 523.9 C1736.2 525.1 1736.7 526.2 1737.2 527.9 C1737.7 529.5 1738.1 531.8 1738.2 533.8Z" fill="#ff0000"/>
<path d="M1746.2 581.1 C1746.1 583.0 1745.9 585.1 1745.4 586.6 C1744.9 588.1 1744.2 589.0 1743.3 590.1 C1742.5 591.1 1741.4 592.0 1740.1 592.8 C1738.8 593.7 1737.3 594.4 1735.6 595.1 C1733.9 595.8 1732.0 596.4 1729.7 596.9 C1727.4 597.4 1725.3 597.9 1721.9 598.1 C1718.5 598.4 1713.4 598.6 1709.2 598.6 C1705.0 598.6 1699.9 598.5 1696.4 598.2 C1693.0 597.9 1690.9 597.5 1688.7 596.9 C1686.5 596.4 1684.7 595.7 1683.2 594.9 C1681.6 594.2 1680.3 593.4 1679.2 592.5 C1678.0 591.7 1677.1 590.8 1676.3 589.7 C1675.5 588.7 1674.8 587.8 1674.3 586.4 C1673.7 585.0 1673.3 582.9 1673.1 581.2 C1672.8 579.4 1672.7 577.2 1672.9 575.7 C1673.1 574.2 1673.4 573.1 1674.1 572.0 C1674.8 570.9 1675.7 569.9 1677.0 568.9 C1678.2 568.0 1679.8 567.2 1681.7 566.6 C1683.6 565.9 1685.8 565.4 1688.3 565.1 C1690.8 564.7 1693.2 564.5 1696.6 564.4 C1700.1 564.3 1705.1 564.3 1709.2 564.4 C1713.3 564.5 1718.0 564.7 1721.3 564.9 C1724.6 565.2 1726.7 565.5 1729.0 565.9 C1731.3 566.3 1733.4 566.8 1735.2 567.4 C1737.1 568.0 1738.7 568.6 1740.1 569.4 C1741.5 570.2 1742.7 571.1 1743.6 572.2 C1744.5 573.2 1745.2 574.2 1745.6 575.7 C1746.0 577.2 1746.2 579.3 1746.2 581.1Z" fill="#ff0000"/>
<path d="M1738.8 617.7 C1738.8 618.8 1738.6 620.2 1738.4 621.2 C1738.1 622.2 1737.6 622.8 1737.1 623.5 C1736.5 624.1 1735.8 624.7 1735.0 625.3 C1734.2 625.9 1733.3 626.4 1732.2 626.8 C1731.0 627.3 1729.8 627.6 1728.3 628.0 C1726.8 628.3 1725.4 628.5 1723.2 628.7 C1721.0 628.8 1717.8 628.9 1715.1 628.9 C1712.4 628.9 1709.2 628.9 1707.0 628.7 C1704.7 628.5 1703.3 628.3 1701.8 628.0 C1700.3 627.7 1699.1 627.3 1697.9 626.9 C1696.8 626.4 1695.9 625.9 1695.2 625.3 C1694.4 624.7 1693.9 624.1 1693.4 623.4 C1693.0 622.7 1692.7 622.1 1692.4 621.1 C1692.2 620.1 1692.1 618.8 1692.0 617.7 C1692.0 616.5 1692.0 615.1 1692.2 614.2 C1692.3 613.2 1692.6 612.5 1693.0 611.8 C1693.5 611.1 1694.0 610.4 1694.8 609.9 C1695.6 609.3 1696.6 608.8 1697.7 608.3 C1698.9 607.9 1700.2 607.5 1701.7 607.2 C1703.2 606.9 1704.7 606.7 1706.9 606.6 C1709.2 606.4 1712.4 606.4 1715.1 606.4 C1717.8 606.4 1721.0 606.5 1723.2 606.7 C1725.3 606.9 1726.7 607.2 1728.1 607.5 C1729.6 607.8 1730.8 608.2 1731.9 608.6 C1733.0 609.1 1733.9 609.5 1734.8 610.1 C1735.6 610.6 1736.4 611.2 1736.9 611.9 C1737.5 612.5 1738.0 613.2 1738.3 614.1 C1738.6 615.1 1738.8 616.5 1738.8 617.7Z" fill="#ff0000"/>
<path d="M1730.5 657.6 C1730.6 658.7 1730.5 660.0 1730.2 661.0 C1729.9 661.9 1729.4 662.5 1728.5 663.2 C1727.6 663.9 1726.3 664.5 1724.8 665.0 C1723.2 665.5 1721.3 666.0 1719.1 666.3 C1717.0 666.7 1714.5 667.0 1711.7 667.3 C1708.9 667.5 1706.4 667.7 1702.5 667.8 C1698.5 668.0 1692.9 668.1 1688.1 668.1 C1683.2 668.1 1677.5 668.0 1673.5 667.9 C1669.6 667.8 1667.0 667.6 1664.3 667.3 C1661.6 667.0 1659.3 666.7 1657.1 666.3 C1655.0 665.9 1653.2 665.4 1651.6 664.9 C1650.0 664.4 1648.5 663.9 1647.4 663.2 C1646.3 662.6 1645.4 662.0 1644.9 661.0 C1644.3 660.1 1644.1 658.7 1644.3 657.6 C1644.4 656.5 1645.0 655.1 1645.7 654.2 C1646.4 653.3 1647.5 652.8 1648.6 652.1 C1649.8 651.5 1651.1 651.0 1652.6 650.5 C1654.1 649.9 1655.7 649.5 1657.6 649.1 C1659.6 648.6 1661.8 648.2 1664.4 647.9 C1667.0 647.6 1669.5 647.4 1673.4 647.2 C1677.4 647.1 1683.2 647.0 1688.0 647.0 C1692.9 647.0 1698.7 647.0 1702.7 647.2 C1706.7 647.3 1709.3 647.5 1712.1 647.8 C1714.9 648.1 1717.3 648.4 1719.4 648.8 C1721.5 649.2 1723.3 649.7 1724.7 650.2 C1726.2 650.8 1727.2 651.4 1728.1 652.1 C1728.9 652.7 1729.4 653.3 1729.8 654.3 C1730.2 655.2 1730.4 656.5 1730.5 657.6Z" fill="#ff0000"/>
<path d="M1744.3 696.4 C1744.4 697.7 1744.3 699.3 1744.1 700.4 C1743.9 701.5 1743.5 702.2 1742.9 703.0 C1742.4 703.8 1741.7 704.5 1740.8 705.1 C1740.0 705.7 1739.0 706.2 1737.8 706.7 C1736.6 707.1 1735.4 707.5 1733.9 707.8 C1732.4 708.1 1731.0 708.3 1728.9 708.4 C1726.8 708.5 1723.8 708.5 1721.3 708.5 C1718.8 708.4 1715.9 708.3 1713.9 708.1 C1711.8 708.0 1710.6 707.7 1709.1 707.4 C1707.7 707.2 1706.4 706.8 1705.3 706.4 C1704.1 706.0 1703.1 705.5 1702.3 704.9 C1701.5 704.3 1700.8 703.6 1700.3 702.8 C1699.8 702.1 1699.4 701.4 1699.2 700.3 C1699.0 699.2 1698.9 697.7 1698.9 696.4 C1698.8 695.0 1698.9 693.5 1699.1 692.4 C1699.3 691.3 1699.6 690.6 1700.0 689.8 C1700.5 689.0 1701.1 688.3 1701.9 687.6 C1702.7 687.0 1703.7 686.5 1704.8 686.0 C1705.9 685.5 1707.2 685.1 1708.6 684.8 C1710.1 684.5 1711.5 684.3 1713.6 684.1 C1715.7 684.0 1718.7 683.9 1721.3 684.0 C1723.9 684.0 1726.9 684.1 1728.9 684.3 C1730.9 684.5 1732.2 684.8 1733.5 685.2 C1734.9 685.6 1735.9 686.0 1736.9 686.5 C1737.9 687.0 1738.8 687.6 1739.6 688.1 C1740.4 688.7 1741.1 689.3 1741.7 690.0 C1742.4 690.8 1743.0 691.4 1743.4 692.4 C1743.8 693.5 1744.1 695.0 1744.3 696.4Z" fill="#ff0000"/>
<path d="M1732.1 737.0 C1732.0 737.9 1731.7 738.9 1731.3 739.5 C1731.0 740.2 1730.5 740.6 1730.0 741.1 C1729.5 741.5 1729.0 742.0 1728.4 742.4 C1727.8 742.8 1727.1 743.1 1726.3 743.5 C1725.5 743.8 1724.5 744.2 1723.4 744.4 C1722.2 744.7 1721.0 744.9 1719.2 745.0 C1717.4 745.1 1714.7 745.2 1712.5 745.2 C1710.2 745.2 1707.5 745.1 1705.7 744.9 C1703.9 744.8 1702.8 744.6 1701.5 744.4 C1700.3 744.2 1699.2 744.0 1698.3 743.6 C1697.3 743.3 1696.5 743.0 1695.8 742.6 C1695.1 742.2 1694.6 741.7 1694.2 741.2 C1693.8 740.7 1693.5 740.3 1693.3 739.6 C1693.0 738.9 1692.9 737.9 1692.9 737.1 C1692.8 736.2 1692.9 735.2 1693.0 734.5 C1693.2 733.8 1693.5 733.3 1693.9 732.8 C1694.4 732.3 1695.0 731.9 1695.8 731.5 C1696.6 731.1 1697.5 730.8 1698.5 730.6 C1699.5 730.3 1700.7 730.1 1701.9 729.9 C1703.2 729.7 1704.3 729.6 1706.0 729.5 C1707.8 729.4 1710.3 729.3 1712.4 729.2 C1714.6 729.2 1717.3 729.1 1719.1 729.2 C1721.0 729.3 1722.2 729.4 1723.5 729.6 C1724.8 729.7 1726.0 730.0 1727.0 730.3 C1727.9 730.6 1728.8 731.0 1729.5 731.4 C1730.2 731.8 1730.8 732.2 1731.2 732.8 C1731.6 733.3 1731.9 733.7 1732.1 734.5 C1732.2 735.2 1732.2 736.2 1732.1 737.0Z" fill="#ff0000"/>
<path d="M1751.2 777.7 C1751.0 779.1 1750.4 780.7 1749.9 781.8 C1749.3 782.9 1748.6 783.5 1747.8 784.3 C1747.0 785.1 1746.3 785.8 1745.3 786.5 C1744.2 787.2 1743.2 787.9 1741.8 788.5 C1740.3 789.1 1738.7 789.7 1736.5 790.1 C1734.4 790.6 1732.3 790.9 1729.1 791.1 C1725.8 791.3 1720.9 791.4 1716.9 791.4 C1712.8 791.3 1708.0 791.2 1704.7 791.0 C1701.5 790.8 1699.4 790.4 1697.3 790.1 C1695.1 789.7 1693.3 789.2 1691.8 788.6 C1690.2 788.0 1689.0 787.4 1688.0 786.7 C1686.9 786.0 1686.2 785.2 1685.6 784.4 C1684.9 783.6 1684.5 782.9 1684.0 781.7 C1683.6 780.6 1683.2 779.1 1683.0 777.7 C1682.8 776.3 1682.6 774.7 1682.7 773.5 C1682.8 772.3 1683.2 771.5 1683.8 770.6 C1684.5 769.8 1685.6 769.0 1686.9 768.4 C1688.2 767.7 1689.8 767.2 1691.6 766.7 C1693.4 766.3 1695.4 765.9 1697.7 765.6 C1699.9 765.3 1701.9 765.0 1705.1 764.8 C1708.3 764.6 1712.9 764.5 1716.8 764.5 C1720.8 764.5 1725.5 764.5 1728.7 764.7 C1731.9 764.8 1734.0 765.1 1736.2 765.5 C1738.5 765.8 1740.3 766.2 1742.0 766.7 C1743.8 767.3 1745.2 767.8 1746.5 768.5 C1747.8 769.1 1748.9 769.8 1749.7 770.7 C1750.5 771.5 1751.0 772.3 1751.3 773.5 C1751.5 774.6 1751.5 776.3 1751.2 777.7Z" fill="#ff0000"/>
</svg>
</div></body></html>
